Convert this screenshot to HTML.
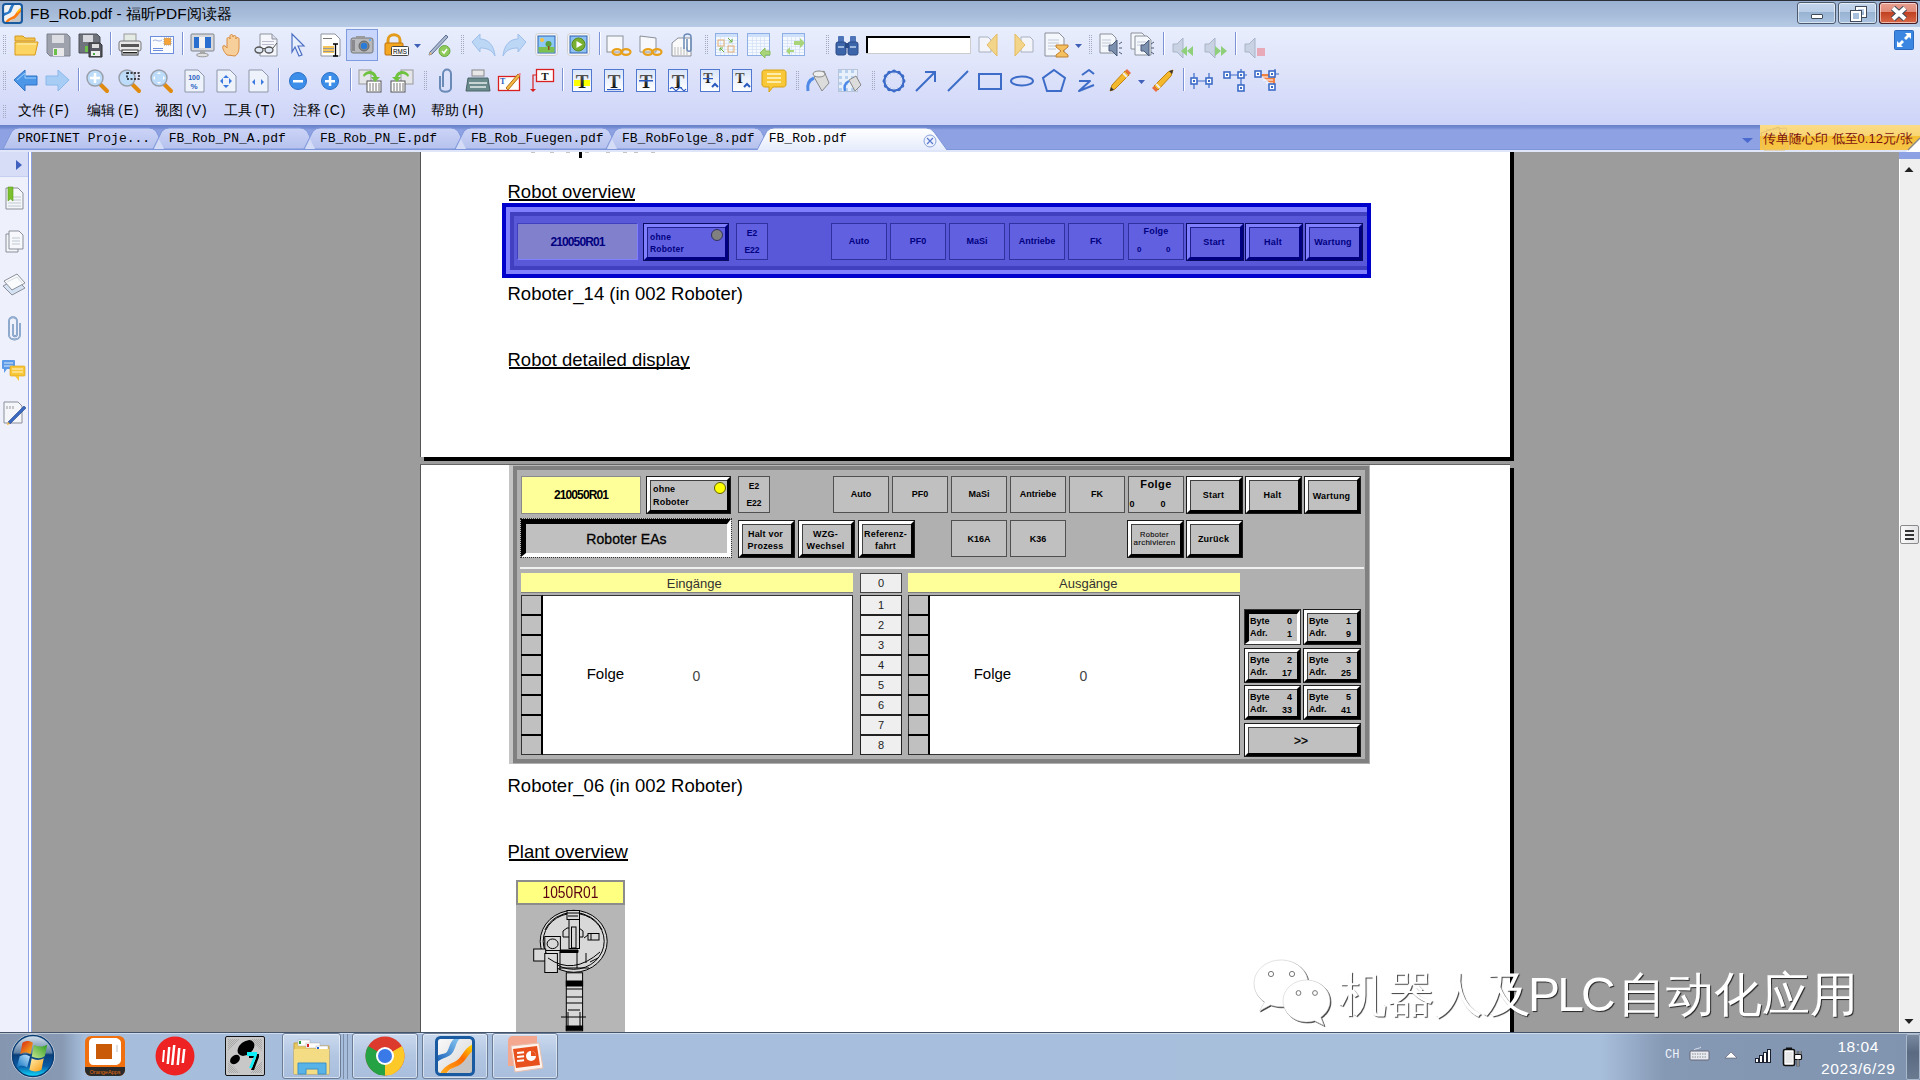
<!DOCTYPE html>
<html><head><meta charset="utf-8">
<style>
*{margin:0;padding:0;box-sizing:border-box}
html,body{width:1920px;height:1080px;overflow:hidden;background:#9c9c9c;font-family:"Liberation Sans",sans-serif;position:relative}
.a{position:absolute}
.t{position:absolute;white-space:nowrap;line-height:1}
svg{position:absolute;overflow:visible}
#title{left:0;top:0;width:1920px;height:27px;background:linear-gradient(#9bb1d1,#a9bedb 60%,#b7cbe6);border-top:1px solid #2a2f38}
#tool{left:0;top:27px;width:1920px;height:98px;background:linear-gradient(#e8eefc,#dde2fa 50%,#ccd4f8)}
#tabs{left:0;top:125px;width:1920px;height:25px;background:#8ea1e2;border-top:2px solid #6f86d6}
#sep150{left:0;top:150px;width:1920px;height:2px;background:#dfe6fa}
#side{left:0;top:152px;width:28px;height:880px;background:#eef0fb}
#sidehead{left:0;top:152px;width:28px;height:25px;background:#d7ddf6;border-bottom:1px solid #c7cff0}
#scroll{left:1899px;top:152px;width:21px;height:880px;background:#efefef;border-left:1px solid #fff}
#taskbar{left:0;top:1032px;width:1920px;height:48px;background:linear-gradient(90deg,#a8bfdc 0,#a8bfdc 1540px,#8497b3 1680px,#8094b0 100%);border-top:1px solid #44556b}
.page{background:#fff;border-left:1px solid #555}
.hb{font-weight:bold;font-size:10px;color:#000}
</style></head><body>
<div id="title" class="a"></div>
<div id="tool" class="a"></div>
<div id="tabs" class="a"></div>
<div id="sep150" class="a"></div>
<div id="side" class="a"></div>
<div id="sidehead" class="a"></div>
<div class="a" style="left:28px;top:152px;width:1px;height:880px;background:#8ea1e2"></div>
<div class="a" style="left:29px;top:152px;width:2px;height:880px;background:#fff"></div>
<div class="a" style="left:31px;top:152px;width:1px;height:880px;background:#8ea1e2"></div>
<div id="scroll" class="a"></div>
<!-- page 1 -->
<div class="a page" style="left:420px;top:152px;width:1090px;height:305px"></div>
<div class="a" style="left:1510px;top:152px;width:4px;height:309px;background:#000"></div>
<div class="a" style="left:424px;top:457px;width:1090px;height:4px;background:#000"></div>
<!-- page 2 -->
<div class="a" style="left:420px;top:464px;width:1090px;height:1px;background:#666"></div>
<div class="a page" style="left:420px;top:465px;width:1090px;height:567px"></div>
<div class="a" style="left:1510px;top:468px;width:4px;height:564px;background:#000"></div>

<svg class="a" style="left:0;top:0" width="1920" height="125"><rect x="3" y="35" width="1" height="1" fill="#a4a9bf"/><rect x="5" y="35" width="1" height="1" fill="#a4a9bf"/><rect x="3" y="37" width="1" height="1" fill="#a4a9bf"/><rect x="5" y="37" width="1" height="1" fill="#a4a9bf"/><rect x="3" y="39" width="1" height="1" fill="#a4a9bf"/><rect x="5" y="39" width="1" height="1" fill="#a4a9bf"/><rect x="3" y="41" width="1" height="1" fill="#a4a9bf"/><rect x="5" y="41" width="1" height="1" fill="#a4a9bf"/><rect x="3" y="43" width="1" height="1" fill="#a4a9bf"/><rect x="5" y="43" width="1" height="1" fill="#a4a9bf"/><rect x="3" y="45" width="1" height="1" fill="#a4a9bf"/><rect x="5" y="45" width="1" height="1" fill="#a4a9bf"/><rect x="3" y="47" width="1" height="1" fill="#a4a9bf"/><rect x="5" y="47" width="1" height="1" fill="#a4a9bf"/><rect x="3" y="49" width="1" height="1" fill="#a4a9bf"/><rect x="5" y="49" width="1" height="1" fill="#a4a9bf"/><rect x="3" y="51" width="1" height="1" fill="#a4a9bf"/><rect x="5" y="51" width="1" height="1" fill="#a4a9bf"/><rect x="3" y="53" width="1" height="1" fill="#a4a9bf"/><rect x="5" y="53" width="1" height="1" fill="#a4a9bf"/><rect x="461" y="35" width="1" height="1" fill="#a4a9bf"/><rect x="463" y="35" width="1" height="1" fill="#a4a9bf"/><rect x="461" y="37" width="1" height="1" fill="#a4a9bf"/><rect x="463" y="37" width="1" height="1" fill="#a4a9bf"/><rect x="461" y="39" width="1" height="1" fill="#a4a9bf"/><rect x="463" y="39" width="1" height="1" fill="#a4a9bf"/><rect x="461" y="41" width="1" height="1" fill="#a4a9bf"/><rect x="463" y="41" width="1" height="1" fill="#a4a9bf"/><rect x="461" y="43" width="1" height="1" fill="#a4a9bf"/><rect x="463" y="43" width="1" height="1" fill="#a4a9bf"/><rect x="461" y="45" width="1" height="1" fill="#a4a9bf"/><rect x="463" y="45" width="1" height="1" fill="#a4a9bf"/><rect x="461" y="47" width="1" height="1" fill="#a4a9bf"/><rect x="463" y="47" width="1" height="1" fill="#a4a9bf"/><rect x="461" y="49" width="1" height="1" fill="#a4a9bf"/><rect x="463" y="49" width="1" height="1" fill="#a4a9bf"/><rect x="461" y="51" width="1" height="1" fill="#a4a9bf"/><rect x="463" y="51" width="1" height="1" fill="#a4a9bf"/><rect x="461" y="53" width="1" height="1" fill="#a4a9bf"/><rect x="463" y="53" width="1" height="1" fill="#a4a9bf"/><rect x="705" y="35" width="1" height="1" fill="#a4a9bf"/><rect x="707" y="35" width="1" height="1" fill="#a4a9bf"/><rect x="705" y="37" width="1" height="1" fill="#a4a9bf"/><rect x="707" y="37" width="1" height="1" fill="#a4a9bf"/><rect x="705" y="39" width="1" height="1" fill="#a4a9bf"/><rect x="707" y="39" width="1" height="1" fill="#a4a9bf"/><rect x="705" y="41" width="1" height="1" fill="#a4a9bf"/><rect x="707" y="41" width="1" height="1" fill="#a4a9bf"/><rect x="705" y="43" width="1" height="1" fill="#a4a9bf"/><rect x="707" y="43" width="1" height="1" fill="#a4a9bf"/><rect x="705" y="45" width="1" height="1" fill="#a4a9bf"/><rect x="707" y="45" width="1" height="1" fill="#a4a9bf"/><rect x="705" y="47" width="1" height="1" fill="#a4a9bf"/><rect x="707" y="47" width="1" height="1" fill="#a4a9bf"/><rect x="705" y="49" width="1" height="1" fill="#a4a9bf"/><rect x="707" y="49" width="1" height="1" fill="#a4a9bf"/><rect x="705" y="51" width="1" height="1" fill="#a4a9bf"/><rect x="707" y="51" width="1" height="1" fill="#a4a9bf"/><rect x="705" y="53" width="1" height="1" fill="#a4a9bf"/><rect x="707" y="53" width="1" height="1" fill="#a4a9bf"/><rect x="826" y="35" width="1" height="1" fill="#a4a9bf"/><rect x="828" y="35" width="1" height="1" fill="#a4a9bf"/><rect x="826" y="37" width="1" height="1" fill="#a4a9bf"/><rect x="828" y="37" width="1" height="1" fill="#a4a9bf"/><rect x="826" y="39" width="1" height="1" fill="#a4a9bf"/><rect x="828" y="39" width="1" height="1" fill="#a4a9bf"/><rect x="826" y="41" width="1" height="1" fill="#a4a9bf"/><rect x="828" y="41" width="1" height="1" fill="#a4a9bf"/><rect x="826" y="43" width="1" height="1" fill="#a4a9bf"/><rect x="828" y="43" width="1" height="1" fill="#a4a9bf"/><rect x="826" y="45" width="1" height="1" fill="#a4a9bf"/><rect x="828" y="45" width="1" height="1" fill="#a4a9bf"/><rect x="826" y="47" width="1" height="1" fill="#a4a9bf"/><rect x="828" y="47" width="1" height="1" fill="#a4a9bf"/><rect x="826" y="49" width="1" height="1" fill="#a4a9bf"/><rect x="828" y="49" width="1" height="1" fill="#a4a9bf"/><rect x="826" y="51" width="1" height="1" fill="#a4a9bf"/><rect x="828" y="51" width="1" height="1" fill="#a4a9bf"/><rect x="826" y="53" width="1" height="1" fill="#a4a9bf"/><rect x="828" y="53" width="1" height="1" fill="#a4a9bf"/><rect x="1089" y="35" width="1" height="1" fill="#a4a9bf"/><rect x="1091" y="35" width="1" height="1" fill="#a4a9bf"/><rect x="1089" y="37" width="1" height="1" fill="#a4a9bf"/><rect x="1091" y="37" width="1" height="1" fill="#a4a9bf"/><rect x="1089" y="39" width="1" height="1" fill="#a4a9bf"/><rect x="1091" y="39" width="1" height="1" fill="#a4a9bf"/><rect x="1089" y="41" width="1" height="1" fill="#a4a9bf"/><rect x="1091" y="41" width="1" height="1" fill="#a4a9bf"/><rect x="1089" y="43" width="1" height="1" fill="#a4a9bf"/><rect x="1091" y="43" width="1" height="1" fill="#a4a9bf"/><rect x="1089" y="45" width="1" height="1" fill="#a4a9bf"/><rect x="1091" y="45" width="1" height="1" fill="#a4a9bf"/><rect x="1089" y="47" width="1" height="1" fill="#a4a9bf"/><rect x="1091" y="47" width="1" height="1" fill="#a4a9bf"/><rect x="1089" y="49" width="1" height="1" fill="#a4a9bf"/><rect x="1091" y="49" width="1" height="1" fill="#a4a9bf"/><rect x="1089" y="51" width="1" height="1" fill="#a4a9bf"/><rect x="1091" y="51" width="1" height="1" fill="#a4a9bf"/><rect x="1089" y="53" width="1" height="1" fill="#a4a9bf"/><rect x="1091" y="53" width="1" height="1" fill="#a4a9bf"/><rect x="110" y="32" width="1" height="23" fill="#7b93d6"/><rect x="111" y="32" width="1" height="23" fill="#fff"/><rect x="182" y="32" width="1" height="23" fill="#7b93d6"/><rect x="183" y="32" width="1" height="23" fill="#fff"/><rect x="599" y="32" width="1" height="23" fill="#7b93d6"/><rect x="600" y="32" width="1" height="23" fill="#fff"/><rect x="1163" y="32" width="1" height="23" fill="#7b93d6"/><rect x="1164" y="32" width="1" height="23" fill="#fff"/><rect x="1235" y="32" width="1" height="23" fill="#7b93d6"/><rect x="1236" y="32" width="1" height="23" fill="#fff"/><g transform="translate(14,33)"><path d="M1 3h8l2 2h10v3H1z" fill="#f3c44c" stroke="#d59a20"/><path d="M1 9h23l-3 13H1z" fill="#fbd462" stroke="#d89a1a"/><path d="M3 11h19" stroke="#fff3b8"/></g><g transform="translate(46,33)"><path d="M1 1h20l3 3v19H4l-3-3z" fill="#9ea2ac" stroke="#7d828c"/><rect x="6" y="2" width="12" height="8" fill="#dcdde2"/><rect x="7" y="15" width="11" height="8" fill="#e8e8ea"/><rect x="8" y="16" width="3" height="6" fill="#6cc04a"/></g><g transform="translate(78,33)"><path d="M1 1h18l3 3v16H1z" fill="#6f737c" stroke="#4d5058"/><rect x="5" y="2" width="10" height="7" fill="#d8d9de"/><rect x="7" y="13" width="3" height="6" fill="#6cc04a"/><path d="M11 10h11l2 2v12H11z" fill="#555860" stroke="#333"/><rect x="14" y="11" width="7" height="4" fill="#ddd"/><rect x="13" y="18" width="9" height="5" fill="#eee"/><rect x="15" y="20" width="2" height="2" fill="#4a4"/></g><g transform="translate(118,33)"><rect x="6" y="1" width="12" height="8" fill="#e4ebe4" stroke="#999"/><rect x="1" y="8" width="22" height="10" rx="2" fill="#e8e8e8" stroke="#777"/><rect x="3" y="11" width="18" height="3" fill="#555"/><rect x="4" y="17" width="16" height="5" fill="#fff" stroke="#333"/><rect x="5" y="19" width="14" height="1.5" fill="#222"/></g><g transform="translate(150,33)"><rect x="0.5" y="3.5" width="23" height="17" fill="#fafbff" stroke="#6d8edc"/><rect x="14" y="5" width="7" height="7" fill="#f6a33a" stroke="#999" stroke-dasharray="1 1"/><path d="M3 8c3-3 5 2 9-1" stroke="#9db0e0" fill="none"/><rect x="3" y="15" width="10" height="1" fill="#6d8edc"/><rect x="3" y="17" width="10" height="1" fill="#6d8edc"/></g><g transform="translate(190,33)"><rect x="1" y="1" width="23" height="17" rx="1" fill="#d7d8dc" stroke="#7d828c"/><rect x="4" y="4" width="17" height="11" fill="#2a6fd0"/><rect x="9" y="4" width="6" height="11" fill="#f2f2f2"/><rect x="10" y="18" width="5" height="3" fill="#aaa"/><ellipse cx="12.5" cy="22" rx="6" ry="1.8" fill="#e0e0e0" stroke="#999"/></g><g transform="translate(222,33)"><path d="M5 22c-3-3-5-7-4-9 1-1 3 0 4 2V6c0-2 3-2 3 0V3c0-2 3-2 3 0v1c0-2 3-2 3 0v2c0-2 3-2 3 0v9c0 4-2 7-4 8z" fill="#f7cf9a" stroke="#d88c40"/></g><g transform="translate(254,33)"><path d="M6 1h12l5 5v17H6z" fill="#f4f6fb" stroke="#8d939e"/><path d="M18 1v5h5" fill="#dde" stroke="#8d939e"/><rect x="8" y="8" width="12" height="1" fill="#bbc"/><rect x="8" y="11" width="12" height="1" fill="#bbc"/><ellipse cx="5" cy="17" rx="4" ry="3" fill="#dfe8f4" stroke="#555" stroke-width="1.3"/><ellipse cx="15" cy="17" rx="4" ry="3" fill="#dfe8f4" stroke="#555" stroke-width="1.3"/><path d="M9 16q1-2 2 0M19 15l4-5" stroke="#555" fill="none"/></g><g transform="translate(291,33)"><path d="M1 1l12 12-6 0 4 9-3 1-4-9-3 5z" fill="#e8f0fc" stroke="#4c6fc4" stroke-width="1.2"/></g><g transform="translate(320,33)"><path d="M1 1h14l5 5v17H1z" fill="#fff" stroke="#8d939e"/><rect x="3" y="5" width="9" height="1" fill="#777"/><rect x="3" y="13" width="11" height="7" fill="#f6c55a"/><rect x="3" y="15" width="11" height="1" fill="#999"/><rect x="3" y="18" width="11" height="1" fill="#999"/><path d="M13 11h5M15.5 11v12M13 23h5" stroke="#000" stroke-width="1.3"/></g><rect x="346.5" y="29.5" width="31" height="31" fill="#c9d6fb" stroke="#7f9be0"/><g transform="translate(350,35)"><rect x="1" y="3" width="22" height="15" rx="2" fill="#b8b9bd" stroke="#777"/><rect x="6" y="1" width="9" height="3" fill="#999"/><rect x="2" y="5" width="3" height="11" fill="#8a8a8e"/><circle cx="14" cy="11" r="5" fill="#888" stroke="#666"/><circle cx="14" cy="11" r="3.2" fill="#2a7ad8"/><circle cx="20" cy="5" r="1" fill="#4af"/></g><g transform="translate(384,33)"><path d="M4 11V7c0-7 12-7 12 0v4" stroke="#e39b1c" stroke-width="3" fill="none"/><rect x="1" y="10" width="18" height="12" rx="1" fill="#f4a821" stroke="#c07010"/><rect x="7.5" y="13.5" width="17" height="9" rx="1" fill="#fff" stroke="#444"/><text x="16" y="21" font-size="7" font-family="Liberation Sans" text-anchor="middle" fill="#000" textLength="14" lengthAdjust="spacingAndGlyphs">RMS</text></g><path d="M414 44h7l-3.5 4z" fill="#3f5fb8"/><g transform="translate(427,33)"><path d="M2 22l3-1 16-17-2-2L3 19z" fill="#aab6cc" stroke="#5a6e92"/><path d="M2 22l1-3 2 2z" fill="#f6c070"/><circle cx="17.5" cy="18" r="5.5" fill="#8fcb5a" stroke="#6aa844"/><path d="M15 18l2 2 3-4" stroke="#fff" stroke-width="1.5" fill="none"/></g><g transform="translate(471,33)"><path d="M1 9l8-8v5c8 0 14 6 15 17-3-6-8-8-15-8v4z" fill="#bcd6f6" stroke="#9ec0ea"/></g><g transform="translate(503,33)"><path d="M23 9l-8-8v5C7 6 1 12 0 23c3-6 8-8 15-8v4z" fill="#bcd6f6" stroke="#9ec0ea"/></g><g transform="translate(535,33)"><rect x="0.5" y="0.5" width="22" height="22" rx="3" fill="#f4f4f4" stroke="#d0d0d0"/><rect x="3" y="3" width="17" height="17" fill="#8ec8f4" stroke="#2c62b8"/><rect x="3.5" y="14" width="16" height="5.5" fill="#7cc050"/><circle cx="7" cy="7" r="2" fill="#f8c040"/><circle cx="13.5" cy="11" r="3" fill="#5aa040"/><rect x="13" y="13" width="1.5" height="4" fill="#8a5020"/></g><g transform="translate(567,33)"><rect x="0.5" y="0.5" width="22" height="22" rx="3" fill="#f4f4f4" stroke="#d0d0d0"/><rect x="3" y="3" width="17" height="17" fill="#8ec0f0" stroke="#2c62b8"/><circle cx="11.5" cy="11.5" r="6.5" fill="#7ab030" stroke="#5a8a20"/><path d="M9.5 8v7l6-3.5z" fill="#fff"/></g><g transform="translate(606,35)"><rect x="1" y="1" width="16" height="16" fill="#f6f8fc" stroke="#8a8f99"/><ellipse cx="11" cy="17" rx="4.5" ry="2.8" fill="none" stroke="#e8a018" stroke-width="2.2"/><ellipse cx="20" cy="17" rx="4.5" ry="2.8" fill="none" stroke="#e8a018" stroke-width="2.2"/></g><g transform="translate(639,35)"><path d="M1 1l16 2v14H1z" fill="#f6f8fc" stroke="#8a8f99"/><ellipse cx="9" cy="17" rx="4.5" ry="2.8" fill="none" stroke="#e8a018" stroke-width="2.2"/><ellipse cx="18" cy="17" rx="4.5" ry="2.8" fill="none" stroke="#e8a018" stroke-width="2.2"/></g><g transform="translate(671,33)"><path d="M1 10l6-5h13v18H1z" fill="#fafafa" stroke="#8a8f99"/><path d="M4 14v8M7 14v8M10 14v8M13 14v8M16 14v8" stroke="#bbb"/><path d="M13 16V4c0-4 7-4 7 0v12c0 3-4 3-4 0V6" fill="none" stroke="#6a8ab8" stroke-width="1.5"/></g><g transform="translate(715,33)"><rect x="0.5" y="0.5" width="22" height="22" fill="#f4f8ff" stroke="#8eaee6"/><rect x="1" y="1" width="21" height="3" fill="#cfe0fa"/><rect x="1" y="7" width="21" height="0.6" fill="#cddcf4"/><rect x="1" y="10" width="21" height="0.6" fill="#cddcf4"/><rect x="1" y="13" width="21" height="0.6" fill="#cddcf4"/><rect x="1" y="16" width="21" height="0.6" fill="#cddcf4"/><rect x="1" y="19" width="21" height="0.6" fill="#cddcf4"/><rect x="5" y="4" width="0.6" height="18" fill="#cddcf4"/><rect x="9" y="4" width="0.6" height="18" fill="#cddcf4"/><rect x="13" y="4" width="0.6" height="18" fill="#cddcf4"/><rect x="17" y="4" width="0.6" height="18" fill="#cddcf4"/><rect x="3" y="7" width="6" height="6" fill="none" stroke="#e6b070"/><rect x="13" y="13" width="6" height="6" fill="none" stroke="#e6b070"/><path d="M13 5l4 4M17 6v3h-3M9 19l-4-4M5 18v-3h3" stroke="#6ab040" fill="none"/></g><g transform="translate(747,33)"><rect x="0.5" y="0.5" width="22" height="22" fill="#f4f8ff" stroke="#8eaee6"/><rect x="1" y="1" width="21" height="3" fill="#cfe0fa"/><rect x="1" y="7" width="21" height="0.6" fill="#cddcf4"/><rect x="1" y="10" width="21" height="0.6" fill="#cddcf4"/><rect x="1" y="13" width="21" height="0.6" fill="#cddcf4"/><rect x="1" y="16" width="21" height="0.6" fill="#cddcf4"/><rect x="1" y="19" width="21" height="0.6" fill="#cddcf4"/><rect x="5" y="4" width="0.6" height="18" fill="#cddcf4"/><rect x="9" y="4" width="0.6" height="18" fill="#cddcf4"/><rect x="13" y="4" width="0.6" height="18" fill="#cddcf4"/><rect x="17" y="4" width="0.6" height="18" fill="#cddcf4"/><path d="M13 20l5-5v3h5v4h-5v3z" fill="#a8d47a" stroke="#8cc060"/></g><g transform="translate(782,33)"><rect x="0.5" y="0.5" width="22" height="22" fill="#f4f8ff" stroke="#8eaee6"/><rect x="1" y="1" width="21" height="3" fill="#cfe0fa"/><rect x="1" y="7" width="21" height="0.6" fill="#cddcf4"/><rect x="1" y="10" width="21" height="0.6" fill="#cddcf4"/><rect x="1" y="13" width="21" height="0.6" fill="#cddcf4"/><rect x="1" y="16" width="21" height="0.6" fill="#cddcf4"/><rect x="1" y="19" width="21" height="0.6" fill="#cddcf4"/><rect x="5" y="4" width="0.6" height="18" fill="#cddcf4"/><rect x="9" y="4" width="0.6" height="18" fill="#cddcf4"/><rect x="13" y="4" width="0.6" height="18" fill="#cddcf4"/><rect x="17" y="4" width="0.6" height="18" fill="#cddcf4"/><path d="M12 8h6v-3l5 5-5 5v-3h-6z" fill="#a8d47a"/><path d="M12 17h-4v-3l-4 4 4 4v-3h4z" fill="#a8d47a"/></g><g transform="translate(836,34)"><rect x="2" y="2" width="6" height="7" rx="1" fill="#4d74b8"/><rect x="14" y="2" width="6" height="7" rx="1" fill="#4d74b8"/><rect x="0" y="8" width="10" height="13" rx="2" fill="#3c64a8" stroke="#2a4a88"/><rect x="12" y="8" width="10" height="13" rx="2" fill="#3c64a8" stroke="#2a4a88"/><rect x="9" y="9" width="4" height="5" fill="#2a4a88"/><rect x="2" y="12" width="6" height="2" fill="#9fb8e0"/><rect x="14" y="12" width="6" height="2" fill="#9fb8e0"/></g><rect x="866" y="36" width="105" height="18" fill="#fff"/><rect x="866" y="36" width="105" height="2" fill="#000"/><rect x="866" y="36" width="2" height="18" fill="#000"/><rect x="866" y="53" width="105" height="1" fill="#ccc"/><rect x="970" y="36" width="1" height="18" fill="#ccc"/><g transform="translate(979,34)"><path d="M0 3h9l3 3v12H0z" fill="#f2f4fa" stroke="#a8b0c0"/><path d="M8 11l10-11v22z" fill="#f3d58a" stroke="#e4bb60"/></g><g transform="translate(1011,34)"><path d="M10 3h9l3 3v12H10z" fill="#f2f4fa" stroke="#a8b0c0"/><path d="M14 11L4 0v22z" fill="#f3d58a" stroke="#e4bb60"/></g><g transform="translate(1044,33)"><path d="M1 0h14l5 5v18H1z" fill="#f4f7fc" stroke="#8a8f99"/><path d="M4 7h11M4 10h11M4 13h11M4 16h8" stroke="#c0c8d8"/><path d="M12 12h12v2l-5 4 5 4v2H12v-2l5-4-5-4z" fill="#f4c060" stroke="#c08030"/></g><path d="M1075 44h7l-3.5 4z" fill="#3f5fb8"/><g transform="translate(1099,33)"><path d="M1 1h12l4 4v15H1z" fill="#f4f7fc" stroke="#8a8f99"/><path d="M3 7h9M3 10h9M3 13h6" stroke="#c0c8d8"/><path d="M10 12h3l5-5v16l-5-5h-3z" fill="#7b8fae" stroke="#4a5a78"/><path d="M20 11l3-2M20 15h3M20 19l3 2" stroke="#4a5a78"/></g><g transform="translate(1131,33)"><path d="M0 0h11l3 3v13H0z" fill="#f4f7fc" stroke="#8a8f99"/><path d="M4 3h12l4 4v15H4z" fill="#f4f7fc" stroke="#8a8f99"/><path d="M6 9h9M6 12h9" stroke="#c0c8d8"/><path d="M10 12h3l5-5v16l-5-5h-3z" fill="#7b8fae" stroke="#4a5a78"/><path d="M20 11l3-2M20 15h3M20 19l3 2" stroke="#4a5a78"/></g><g transform="translate(1171,36)"><path d="M2 8h4l6-6v20l-6-6H2z" fill="#c8d2e2" stroke="#a8b4c8"/><path d="M22 10v10l-6-5zM16 10v10l-6-5z" fill="#8ecf7a"/></g><g transform="translate(1203,36)"><path d="M2 8h4l6-6v20l-6-6H2z" fill="#c8d2e2" stroke="#a8b4c8"/><path d="M12 10v10l6-5zM18 10v10l6-5z" fill="#8ecf7a"/></g><g transform="translate(1243,36)"><path d="M2 8h4l6-6v20l-6-6H2z" fill="#c8d2e2" stroke="#a8b4c8"/><rect x="14" y="12" width="8" height="8" fill="#e8aab8"/></g><rect x="3" y="71" width="1" height="1" fill="#a4a9bf"/><rect x="5" y="71" width="1" height="1" fill="#a4a9bf"/><rect x="3" y="73" width="1" height="1" fill="#a4a9bf"/><rect x="5" y="73" width="1" height="1" fill="#a4a9bf"/><rect x="3" y="75" width="1" height="1" fill="#a4a9bf"/><rect x="5" y="75" width="1" height="1" fill="#a4a9bf"/><rect x="3" y="77" width="1" height="1" fill="#a4a9bf"/><rect x="5" y="77" width="1" height="1" fill="#a4a9bf"/><rect x="3" y="79" width="1" height="1" fill="#a4a9bf"/><rect x="5" y="79" width="1" height="1" fill="#a4a9bf"/><rect x="3" y="81" width="1" height="1" fill="#a4a9bf"/><rect x="5" y="81" width="1" height="1" fill="#a4a9bf"/><rect x="3" y="83" width="1" height="1" fill="#a4a9bf"/><rect x="5" y="83" width="1" height="1" fill="#a4a9bf"/><rect x="3" y="85" width="1" height="1" fill="#a4a9bf"/><rect x="5" y="85" width="1" height="1" fill="#a4a9bf"/><rect x="3" y="87" width="1" height="1" fill="#a4a9bf"/><rect x="5" y="87" width="1" height="1" fill="#a4a9bf"/><rect x="3" y="89" width="1" height="1" fill="#a4a9bf"/><rect x="5" y="89" width="1" height="1" fill="#a4a9bf"/><rect x="424" y="71" width="1" height="1" fill="#a4a9bf"/><rect x="426" y="71" width="1" height="1" fill="#a4a9bf"/><rect x="424" y="73" width="1" height="1" fill="#a4a9bf"/><rect x="426" y="73" width="1" height="1" fill="#a4a9bf"/><rect x="424" y="75" width="1" height="1" fill="#a4a9bf"/><rect x="426" y="75" width="1" height="1" fill="#a4a9bf"/><rect x="424" y="77" width="1" height="1" fill="#a4a9bf"/><rect x="426" y="77" width="1" height="1" fill="#a4a9bf"/><rect x="424" y="79" width="1" height="1" fill="#a4a9bf"/><rect x="426" y="79" width="1" height="1" fill="#a4a9bf"/><rect x="424" y="81" width="1" height="1" fill="#a4a9bf"/><rect x="426" y="81" width="1" height="1" fill="#a4a9bf"/><rect x="424" y="83" width="1" height="1" fill="#a4a9bf"/><rect x="426" y="83" width="1" height="1" fill="#a4a9bf"/><rect x="424" y="85" width="1" height="1" fill="#a4a9bf"/><rect x="426" y="85" width="1" height="1" fill="#a4a9bf"/><rect x="424" y="87" width="1" height="1" fill="#a4a9bf"/><rect x="426" y="87" width="1" height="1" fill="#a4a9bf"/><rect x="424" y="89" width="1" height="1" fill="#a4a9bf"/><rect x="426" y="89" width="1" height="1" fill="#a4a9bf"/><rect x="796" y="71" width="1" height="1" fill="#a4a9bf"/><rect x="798" y="71" width="1" height="1" fill="#a4a9bf"/><rect x="796" y="73" width="1" height="1" fill="#a4a9bf"/><rect x="798" y="73" width="1" height="1" fill="#a4a9bf"/><rect x="796" y="75" width="1" height="1" fill="#a4a9bf"/><rect x="798" y="75" width="1" height="1" fill="#a4a9bf"/><rect x="796" y="77" width="1" height="1" fill="#a4a9bf"/><rect x="798" y="77" width="1" height="1" fill="#a4a9bf"/><rect x="796" y="79" width="1" height="1" fill="#a4a9bf"/><rect x="798" y="79" width="1" height="1" fill="#a4a9bf"/><rect x="796" y="81" width="1" height="1" fill="#a4a9bf"/><rect x="798" y="81" width="1" height="1" fill="#a4a9bf"/><rect x="796" y="83" width="1" height="1" fill="#a4a9bf"/><rect x="798" y="83" width="1" height="1" fill="#a4a9bf"/><rect x="796" y="85" width="1" height="1" fill="#a4a9bf"/><rect x="798" y="85" width="1" height="1" fill="#a4a9bf"/><rect x="796" y="87" width="1" height="1" fill="#a4a9bf"/><rect x="798" y="87" width="1" height="1" fill="#a4a9bf"/><rect x="796" y="89" width="1" height="1" fill="#a4a9bf"/><rect x="798" y="89" width="1" height="1" fill="#a4a9bf"/><rect x="872" y="71" width="1" height="1" fill="#a4a9bf"/><rect x="874" y="71" width="1" height="1" fill="#a4a9bf"/><rect x="872" y="73" width="1" height="1" fill="#a4a9bf"/><rect x="874" y="73" width="1" height="1" fill="#a4a9bf"/><rect x="872" y="75" width="1" height="1" fill="#a4a9bf"/><rect x="874" y="75" width="1" height="1" fill="#a4a9bf"/><rect x="872" y="77" width="1" height="1" fill="#a4a9bf"/><rect x="874" y="77" width="1" height="1" fill="#a4a9bf"/><rect x="872" y="79" width="1" height="1" fill="#a4a9bf"/><rect x="874" y="79" width="1" height="1" fill="#a4a9bf"/><rect x="872" y="81" width="1" height="1" fill="#a4a9bf"/><rect x="874" y="81" width="1" height="1" fill="#a4a9bf"/><rect x="872" y="83" width="1" height="1" fill="#a4a9bf"/><rect x="874" y="83" width="1" height="1" fill="#a4a9bf"/><rect x="872" y="85" width="1" height="1" fill="#a4a9bf"/><rect x="874" y="85" width="1" height="1" fill="#a4a9bf"/><rect x="872" y="87" width="1" height="1" fill="#a4a9bf"/><rect x="874" y="87" width="1" height="1" fill="#a4a9bf"/><rect x="872" y="89" width="1" height="1" fill="#a4a9bf"/><rect x="874" y="89" width="1" height="1" fill="#a4a9bf"/><rect x="78" y="68" width="1" height="23" fill="#7b93d6"/><rect x="79" y="68" width="1" height="23" fill="#fff"/><rect x="278" y="68" width="1" height="23" fill="#7b93d6"/><rect x="279" y="68" width="1" height="23" fill="#fff"/><rect x="350" y="68" width="1" height="23" fill="#7b93d6"/><rect x="351" y="68" width="1" height="23" fill="#fff"/><rect x="562" y="68" width="1" height="23" fill="#7b93d6"/><rect x="563" y="68" width="1" height="23" fill="#fff"/><rect x="1183" y="68" width="1" height="23" fill="#7b93d6"/><rect x="1184" y="68" width="1" height="23" fill="#fff"/><g transform="translate(14,69)"><path d="M0 11L11 1v6h12v9H11v6z" fill="#4c96e8" stroke="#2e74c8"/><path d="M3 11l8-7v5h11" stroke="#9cd0ff" fill="none"/></g><g transform="translate(46,69)"><path d="M23 11L12 1v6H0v9h12v6z" fill="#a8cdf4" stroke="#8ab8ec"/></g><g transform="translate(86,69)"><path d="M14 15l7 7" stroke="#e08a10" stroke-width="4" stroke-linecap="round"/><circle cx="9" cy="9" r="8" fill="#bcdcfa" stroke="#9aa0aa" stroke-width="1.5"/><path d="M9 4v10M4 9h10" stroke="#fff" stroke-width="2.5"/></g><g transform="translate(118,69)"><path d="M14 15l7 7" stroke="#e08a10" stroke-width="4" stroke-linecap="round"/><circle cx="9" cy="9" r="8" fill="#bcdcfa" stroke="#9aa0aa" stroke-width="1.5"/><rect x="9" y="4" width="12" height="6" fill="none" stroke="#111" stroke-width="1.4" stroke-dasharray="2 1.5"/></g><g transform="translate(150,69)"><path d="M14 15l7 7" stroke="#e08a10" stroke-width="4" stroke-linecap="round"/><circle cx="9" cy="9" r="8" fill="#bcdcfa" stroke="#9aa0aa" stroke-width="1.5"/><path d="M9 3l2 2H7zM9 15l2-2H7zM3 9l2-2v4zM15 9l-2-2v4z" fill="#fff"/></g><g transform="translate(184,69)"><path d="M1 1h13l6 6v16H1z" fill="#eef3fb" stroke="#8d96a8"/><text x="10" y="11" font-size="7" font-weight="bold" font-family="Liberation Sans" text-anchor="middle" fill="#2a62c0">100</text><text x="10" y="20" font-size="8" font-weight="bold" font-family="Liberation Sans" text-anchor="middle" fill="#2a62c0">%</text></g><g transform="translate(216,69)"><path d="M1 1h13l6 6v16H1z" fill="#eef3fb" stroke="#8d96a8"/><path d="M10 6l3 3H7zM10 19l3-3H7zM4 12l3-3v6zM16 12l-3-3v6z" fill="#3a7ae0"/></g><g transform="translate(248,69)"><path d="M1 1h13l6 6v16H1z" fill="#eef3fb" stroke="#8d96a8"/><path d="M4 13l3-3v6zM16 13l-3-3v6z" fill="#3a7ae0"/></g><g transform="translate(289,72)"><circle cx="9" cy="9" r="8.5" fill="#3d8ee8" stroke="#2a70c8"/><rect x="4" y="8" width="10" height="2.5" fill="#fff"/></g><g transform="translate(321,72)"><circle cx="9" cy="9" r="8.5" fill="#3d8ee8" stroke="#2a70c8"/><rect x="4" y="8" width="10" height="2.5" fill="#fff"/><rect x="7.8" y="4" width="2.5" height="10" fill="#fff"/></g><g transform="translate(358,69)"><rect x="1" y="1" width="12" height="14" fill="#e4e6ea" stroke="#999"/><rect x="9" y="12" width="14" height="11" fill="#fff" stroke="#555"/><path d="M12 14v8M15 14v8M18 14v8M21 14v8" stroke="#777"/><path d="M5 6c4-6 12-5 14 2h3l-5 5-4-5h3c-2-4-7-4-10 0z" fill="#6fc23e"/></g><g transform="translate(390,69)"><rect x="11" y="1" width="12" height="14" fill="#e4e6ea" stroke="#999"/><rect x="1" y="12" width="14" height="11" fill="#fff" stroke="#555"/><path d="M4 14v8M7 14v8M10 14v8M13 14v8" stroke="#777"/><path d="M19 6c-4-6-12-5-14 2H2l5 5 4-5H8c2-4 7-4 10 0z" fill="#6fc23e"/></g><g transform="translate(439,69)"><path d="M4 18V5c0-6 8-6 8 0v14c0 5-11 5-11 0V7" fill="none" stroke="#6a8ab8" stroke-width="2"/></g><g transform="translate(466,70)"><rect x="6" y="0" width="12" height="6" fill="#e8e8e8" stroke="#888"/><path d="M2 8h20l2 13H0z" fill="#6a8a8c" stroke="#4a6466"/><rect x="3" y="12" width="18" height="2" fill="#c8d4d4"/><rect x="4" y="16" width="16" height="2" fill="#c8d4d4"/></g><g transform="translate(498,71)"><rect x="0.5" y="5.5" width="21" height="14" fill="#fff" stroke="#d82020" stroke-width="1.3"/><text x="2" y="13" font-size="8" font-weight="bold" font-family="Liberation Serif" fill="#2a5ac0">T</text><path d="M8 17l12-14 2 2-12 14z" fill="#f4b840" stroke="#b07020"/><path d="M20 3l2 2 1-2-1-1z" fill="#f08090"/></g><g transform="translate(530,69)"><rect x="6.5" y="0.5" width="17" height="12" fill="#fff" stroke="#d82020" stroke-width="1.3"/><text x="15" y="10.5" font-size="11" font-weight="bold" font-family="Liberation Serif" text-anchor="middle" fill="#111">T</text><path d="M6 6H3v16" stroke="#d82020" fill="none" stroke-width="1.2"/><path d="M0 20l3 3 3-3z" fill="#d82020"/></g><defs><linearGradient id="tbg" x1="0" y1="0" x2="0" y2="1"><stop offset="0" stop-color="#d8e4f8"/><stop offset=".5" stop-color="#eef3fc"/><stop offset="1" stop-color="#fff"/></linearGradient><linearGradient id="tg2" x1="0" y1="0" x2="0" y2="1"><stop offset="0" stop-color="#666"/><stop offset="1" stop-color="#000"/></linearGradient></defs><g transform="translate(572,69)"><rect x="0.5" y="0.5" width="19" height="22" fill="url(#tbg)" stroke="#5078d0"/><rect x="2" y="11" width="16" height="6" fill="#ffff00"/><text x="10" y="19" font-size="19" font-weight="bold" font-family="Liberation Serif" text-anchor="middle" fill="url(#tg2)">T</text></g><g transform="translate(604,69)"><rect x="0.5" y="0.5" width="19" height="22" fill="url(#tbg)" stroke="#5078d0"/><text x="10" y="19" font-size="19" font-weight="bold" font-family="Liberation Serif" text-anchor="middle" fill="url(#tg2)">T</text><rect x="3" y="20" width="14" height="1.2" fill="#2a5ac0"/></g><g transform="translate(636,69)"><rect x="0.5" y="0.5" width="19" height="22" fill="url(#tbg)" stroke="#5078d0"/><text x="10" y="19" font-size="19" font-weight="bold" font-family="Liberation Serif" text-anchor="middle" fill="url(#tg2)">T</text><rect x="3" y="11" width="14" height="1.5" fill="#2a5ac0"/></g><g transform="translate(668,69)"><rect x="0.5" y="0.5" width="19" height="22" fill="url(#tbg)" stroke="#5078d0"/><text x="10" y="19" font-size="19" font-weight="bold" font-family="Liberation Serif" text-anchor="middle" fill="url(#tg2)">T</text><path d="M2 20q2-3 4 0t4 0t4 0t4 0" stroke="#2a5ac0" fill="none" stroke-width="1.3"/></g><g transform="translate(700,69)"><rect x="0.5" y="0.5" width="19" height="22" fill="url(#tbg)" stroke="#5078d0"/><text x="8" y="14" font-size="14" font-weight="bold" font-family="Liberation Serif" text-anchor="middle" fill="url(#tg2)">T</text><rect x="3" y="9" width="10" height="1.2" fill="#2a5ac0"/><path d="M12 18l3-3 3 3" stroke="#2a5ac0" stroke-width="2" fill="none"/></g><g transform="translate(732,69)"><rect x="0.5" y="0.5" width="19" height="22" fill="url(#tbg)" stroke="#5078d0"/><text x="8" y="14" font-size="14" font-weight="bold" font-family="Liberation Serif" text-anchor="middle" fill="url(#tg2)">T</text><path d="M12 18l3-3 3 3" stroke="#2a5ac0" stroke-width="2" fill="none"/></g><g transform="translate(762,69)"><path d="M3 1h18c2 0 3 1 3 3v11c0 2-1 3-3 3H11l-4 5v-5H3c-2 0-3-1-3-3V4c0-2 1-3 3-3z" fill="#f8c838" stroke="#d8a010"/><path d="M5 5h14M5 9h14M5 13h14" stroke="#fff8d0" stroke-width="1.3"/></g><g transform="translate(806,69)"><path d="M8 8l10-6 5 12-7 8z" fill="#dcdcdc" stroke="#888"/><ellipse cx="13" cy="5" rx="6" ry="3" fill="#eee" stroke="#888"/><path d="M8 9c-5 2-7 7-6 13" stroke="#4d8ae8" stroke-width="3" fill="none"/></g><g transform="translate(838,69)"><rect x="0.5" y="0.5" width="19" height="22" fill="#e8f0fb" stroke="#b8c4d8"/><rect x="1" y="1" width="3" height="3" fill="#b8d0f0"/><rect x="1" y="7" width="3" height="3" fill="#b8d0f0"/><rect x="1" y="13" width="3" height="3" fill="#b8d0f0"/><rect x="1" y="19" width="3" height="3" fill="#b8d0f0"/><rect x="7" y="1" width="3" height="3" fill="#b8d0f0"/><rect x="7" y="7" width="3" height="3" fill="#b8d0f0"/><rect x="7" y="13" width="3" height="3" fill="#b8d0f0"/><rect x="7" y="19" width="3" height="3" fill="#b8d0f0"/><rect x="13" y="1" width="3" height="3" fill="#b8d0f0"/><rect x="13" y="7" width="3" height="3" fill="#b8d0f0"/><rect x="13" y="13" width="3" height="3" fill="#b8d0f0"/><rect x="13" y="19" width="3" height="3" fill="#b8d0f0"/><path d="M11 11l7-4 5 9-6 6z" fill="#dcdcdc" stroke="#888"/><path d="M11 12c-4 2-5 6-4 10" stroke="#4d8ae8" stroke-width="2.5" fill="none"/></g><g transform="translate(882,69)"><circle cx="12" cy="12" r="9.5" fill="none" stroke="#3c6cc8" stroke-width="2.2"/><circle cx="21.50" cy="12.00" r="2" fill="#3c6cc8"/><circle cx="20.23" cy="16.75" r="2" fill="#3c6cc8"/><circle cx="16.75" cy="20.23" r="2" fill="#3c6cc8"/><circle cx="12.00" cy="21.50" r="2" fill="#3c6cc8"/><circle cx="7.25" cy="20.23" r="2" fill="#3c6cc8"/><circle cx="3.77" cy="16.75" r="2" fill="#3c6cc8"/><circle cx="2.50" cy="12.00" r="2" fill="#3c6cc8"/><circle cx="3.77" cy="7.25" r="2" fill="#3c6cc8"/><circle cx="7.25" cy="3.77" r="2" fill="#3c6cc8"/><circle cx="12.00" cy="2.50" r="2" fill="#3c6cc8"/><circle cx="16.75" cy="3.77" r="2" fill="#3c6cc8"/><circle cx="20.23" cy="7.25" r="2" fill="#3c6cc8"/><circle cx="12" cy="12" r="8" fill="none" stroke="#dfe5fa" stroke-width="1"/></g><g transform="translate(914,69)"><path d="M2 22L21 3M11 3h10v10" stroke="#3c6cc8" stroke-width="2" fill="none"/></g><g transform="translate(946,69)"><path d="M2 22L22 2" stroke="#3c6cc8" stroke-width="2" fill="none"/></g><g transform="translate(978,73)"><rect x="1" y="1" width="22" height="15" fill="none" stroke="#3c6cc8" stroke-width="2"/></g><g transform="translate(1010,75)"><ellipse cx="12" cy="6" rx="11" ry="4.5" fill="none" stroke="#3c6cc8" stroke-width="2"/></g><g transform="translate(1042,69)"><path d="M12 1l11 8-4 13H5L1 9z" fill="none" stroke="#3c6cc8" stroke-width="2"/></g><g transform="translate(1076,69)"><path d="M6 6l7-5 5 4M3 12h11L3 22l15-6" stroke="#3c6cc8" stroke-width="2" fill="none" stroke-linejoin="round"/></g><g transform="translate(1108,69)"><path d="M2 22l2-6 13-14 4 4L7 20z" fill="#f4b82c" stroke="#c08010"/><path d="M17 2l4 4 2-2-4-4z" fill="#e87040"/><path d="M15 4l4 4" stroke="#eee" stroke-width="2"/><path d="M2 22l1-4 3 3z" fill="#333"/></g><path d="M1138 80h7l-3.5 4z" fill="#3f5fb8"/><g transform="translate(1151,69)"><path d="M22 1l-2 6-13 14-4-4L17 3z" fill="#f4b82c" stroke="#c08010"/><path d="M7 21L3 17 1 19l4 4z" fill="#e87040"/><path d="M9 19l-4-4" stroke="#eee" stroke-width="2"/><path d="M22 1l-4 1 3 3z" fill="#333"/></g><g transform="translate(1191,73)"><path d="M3 0v16M18 0v15M3 8h15" stroke="#3c6cc8" stroke-width="1.2"/><rect x="0" y="5" width="6" height="6" fill="#fff" stroke="#3c6cc8" stroke-width="1.6"/><rect x="2" y="7" width="2" height="2" fill="#3c6cc8"/><rect x="15" y="5" width="6" height="6" fill="#fff" stroke="#3c6cc8" stroke-width="1.6"/><rect x="17" y="7" width="2" height="2" fill="#3c6cc8"/></g><g transform="translate(1223,69)"><path d="M4 6h14M18 0v22M18 6h6" stroke="#3c6cc8" stroke-width="1.2"/><rect x="1" y="3" width="6" height="6" fill="#fff" stroke="#3c6cc8" stroke-width="1.6"/><rect x="3" y="5" width="2" height="2" fill="#3c6cc8"/><rect x="15" y="3" width="6" height="6" fill="#fff" stroke="#3c6cc8" stroke-width="1.6"/><rect x="17" y="5" width="2" height="2" fill="#3c6cc8"/><rect x="15" y="16" width="6" height="6" fill="#fff" stroke="#3c6cc8" stroke-width="1.6"/><rect x="17" y="18" width="2" height="2" fill="#3c6cc8"/></g><g transform="translate(1255,69)"><path d="M4 5h16l0 13z" fill="#f08040"/><path d="M6 8h12M8 11h10M11 14h7" stroke="#fff" stroke-width="1.2"/><path d="M20 0v5h4" stroke="#3c6cc8" stroke-width="1.2" fill="none"/><rect x="0" y="2" width="6" height="6" fill="#fff" stroke="#3c6cc8" stroke-width="1.6"/><rect x="2" y="4" width="2" height="2" fill="#3c6cc8"/><rect x="14" y="2" width="6" height="6" fill="#fff" stroke="#3c6cc8" stroke-width="1.6"/><rect x="16" y="4" width="2" height="2" fill="#3c6cc8"/><rect x="14" y="15" width="6" height="6" fill="#fff" stroke="#3c6cc8" stroke-width="1.6"/><rect x="16" y="17" width="2" height="2" fill="#3c6cc8"/></g><g transform="translate(1894,30)"><rect x="0.5" y="0.5" width="19" height="19" rx="1" fill="#3a86e0" stroke="#2a6ac0"/><path d="M11 3h6v6l-2-2-3 3-2-2 3-3zM9 17H3v-6l2 2 3-3 2 2-3 3z" fill="#fff"/></g></svg>
<svg class="a" style="left:2px;top:3px" width="21" height="21" viewBox="0 0 40 40"><g><rect x="2" y="2" width="36" height="36" rx="3" fill="#f2f2f2"/><path d="M12 38C16 31 22 31 27 26 32 20 33 15 38 12V38z" fill="#c4c4c4"/><path d="M2 20C7 17 11 19 13 14 15 9 16 5 20 2h6C21 5 21 11 18 16 14 22 8 21 2 26z" fill="#2a78c8"/><path d="M5 38C8 31 15 28 21 25 27 22 28 13 38 8v7C33 18 31 24 26 28 21 32 15 31 11 38z" fill="#ff7a10"/><path d="M28 18C30 14 33 11 38 8v4C34 14 32 16 30 19z" fill="#ffd000"/><rect x="2" y="2" width="36" height="36" rx="5" fill="none" stroke="#1a5aa0" stroke-width="4"/></g></svg>
<div class="t" style="left:30px;top:5.5px;font-size:15.4px;color:#000">FB_Rob.pdf - 福昕PDF阅读器</div>
<div class="a" style="left:1797px;top:2px;width:39px;height:22px;border:1px solid #4c5a70;border-radius:3px;background:linear-gradient(#c4d6ec 0,#b8cce6 45%,#98b2d2 46%,#a8c2e0 100%);box-shadow:inset 0 0 0 1px rgba(255,255,255,.55)"><div class="a" style="left:13px;top:11px;width:12px;height:5px;background:#fff;border:1px solid #404a58;border-radius:1px"></div></div>
<div class="a" style="left:1838px;top:2px;width:39px;height:22px;border:1px solid #4c5a70;border-radius:3px;background:linear-gradient(#c4d6ec 0,#b8cce6 45%,#98b2d2 46%,#a8c2e0 100%);box-shadow:inset 0 0 0 1px rgba(255,255,255,.55)"><div class="a" style="left:17px;top:4px;width:10px;height:10px;border:2px solid #fff;outline:1px solid #404a58"></div><div class="a" style="left:12px;top:8px;width:10px;height:10px;border:2px solid #fff;background:#a8c0dc;outline:1px solid #404a58"></div></div>
<div class="a" style="left:1879px;top:2px;width:39px;height:22px;border:1px solid #4c5a70;border-radius:3px;background:linear-gradient(#e8a090 0,#e08a78 45%,#c04020 46%,#d86848 100%);box-shadow:inset 0 0 0 1px rgba(255,255,255,.55)"><svg class="a" style="left:11px;top:3px" width="16" height="15"><path d="M2 2l12 11M14 2L2 13" stroke="#404a58" stroke-width="6"/><path d="M2 2l12 11M14 2L2 13" stroke="#fff" stroke-width="4"/></svg></div>
<div class="a" style="left:1879px;top:2px;width:39px;height:22px;border:1px solid #4a1a20;border-radius:3px"></div>
<svg class="a" style="left:3px;top:105px" width="4" height="14"><rect x="0" y="0" width="1" height="1" fill="#a4a9bf"/><rect x="2" y="0" width="1" height="1" fill="#a4a9bf"/><rect x="0" y="2" width="1" height="1" fill="#a4a9bf"/><rect x="2" y="2" width="1" height="1" fill="#a4a9bf"/><rect x="0" y="4" width="1" height="1" fill="#a4a9bf"/><rect x="2" y="4" width="1" height="1" fill="#a4a9bf"/><rect x="0" y="6" width="1" height="1" fill="#a4a9bf"/><rect x="2" y="6" width="1" height="1" fill="#a4a9bf"/><rect x="0" y="8" width="1" height="1" fill="#a4a9bf"/><rect x="2" y="8" width="1" height="1" fill="#a4a9bf"/><rect x="0" y="10" width="1" height="1" fill="#a4a9bf"/><rect x="2" y="10" width="1" height="1" fill="#a4a9bf"/><rect x="0" y="12" width="1" height="1" fill="#a4a9bf"/><rect x="2" y="12" width="1" height="1" fill="#a4a9bf"/></svg>
<div class="t" style="left:18px;top:103px;font-size:14px;color:#000">文件<span style="margin-left:3px;letter-spacing:1px">(F)</span></div>
<div class="t" style="left:87px;top:103px;font-size:14px;color:#000">编辑<span style="margin-left:3px;letter-spacing:1px">(E)</span></div>
<div class="t" style="left:155px;top:103px;font-size:14px;color:#000">视图<span style="margin-left:3px;letter-spacing:1px">(V)</span></div>
<div class="t" style="left:224px;top:103px;font-size:14px;color:#000">工具<span style="margin-left:3px;letter-spacing:1px">(T)</span></div>
<div class="t" style="left:293px;top:103px;font-size:14px;color:#000">注释<span style="margin-left:3px;letter-spacing:1px">(C)</span></div>
<div class="t" style="left:362px;top:103px;font-size:14px;color:#000">表单<span style="margin-left:3px;letter-spacing:1px">(M)</span></div>
<div class="t" style="left:431px;top:103px;font-size:14px;color:#000">帮助<span style="margin-left:3px;letter-spacing:1px">(H)</span></div>
<svg class="a" style="left:0;top:125px" width="1920" height="27"><defs><linearGradient id="tg" x1="0" y1="0" x2="0" y2="1"><stop offset="0" stop-color="#ccd4f6"/><stop offset="1" stop-color="#b6c2ee"/></linearGradient><linearGradient id="ta" x1="0" y1="0" x2="0" y2="1"><stop offset="0" stop-color="#ffffff"/><stop offset="1" stop-color="#e6ecfc"/></linearGradient></defs><defs><linearGradient id="tbt" x1="0" y1="0" x2="0" y2="1"><stop offset="0" stop-color="#6a80c8"/><stop offset=".45" stop-color="#7088d0"/><stop offset="1" stop-color="#8ea2e2"/></linearGradient></defs><rect x="0" y="0" width="1920" height="5" fill="url(#tbt)"/><path d="M3 24 L12 6 Q15 3 19 3 L149 3 Q153 3 156 6 L165 24 Z" fill="url(#tg)" stroke="#7d96da" stroke-width="1"/><path d="M153 24 L162 6 Q165 3 169 3 L300 3 Q304 3 307 6 L316 24 Z" fill="url(#tg)" stroke="#7d96da" stroke-width="1"/><path d="M304 24 L313 6 Q316 3 320 3 L451 3 Q455 3 458 6 L467 24 Z" fill="url(#tg)" stroke="#7d96da" stroke-width="1"/><path d="M455 24 L464 6 Q467 3 471 3 L602 3 Q606 3 609 6 L618 24 Z" fill="url(#tg)" stroke="#7d96da" stroke-width="1"/><path d="M606 24 L615 6 Q618 3 622 3 L754 3 Q758 3 761 6 L770 24 Z" fill="url(#tg)" stroke="#7d96da" stroke-width="1"/><path d="M154 24 L159 14 L164 24 Z" fill="#d4dcf6"/><path d="M305 24 L310 14 L315 24 Z" fill="#d4dcf6"/><path d="M456 24 L461 14 L466 24 Z" fill="#d4dcf6"/><path d="M607 24 L612 14 L617 24 Z" fill="#d4dcf6"/><rect x="0" y="24" width="757" height="1" fill="#7d96da"/><rect x="947" y="24" width="973" height="1" fill="#7d96da"/><path d="M757 25 L767 6 Q770 3 774 3 L926 3 Q931 3 934 7 L947 25 Z" fill="url(#ta)"/><path d="M757 25 L767 6 Q770 3 774 3 L926 3 Q931 3 934 7 L947 25" fill="none" stroke="#7d96da" stroke-width="1"/><circle cx="930" cy="16" r="6" fill="#eef2fc" stroke="#8aa2dc"/><path d="M927 13l6 6M933 13l-6 6" stroke="#5a7ad0" stroke-width="1.2"/><path d="M1742 13h11l-5.5 5z" fill="#4a6ad0"/></svg>
<div class="t" style="left:17.5px;top:132px;font-size:13px;font-family:'Liberation Mono',monospace;color:#000">PROFINET Proje...</div>
<div class="t" style="left:168.75px;top:132px;font-size:13px;font-family:'Liberation Mono',monospace;color:#000">FB_Rob_PN_A.pdf</div>
<div class="t" style="left:320px;top:132px;font-size:13px;font-family:'Liberation Mono',monospace;color:#000">FB_Rob_PN_E.pdf</div>
<div class="t" style="left:471px;top:132px;font-size:13px;font-family:'Liberation Mono',monospace;color:#000">FB_Rob_Fuegen.pdf</div>
<div class="t" style="left:622px;top:132px;font-size:13px;font-family:'Liberation Mono',monospace;color:#000">FB_RobFolge_8.pdf</div>
<div class="t" style="left:768.75px;top:132px;font-size:13px;font-family:'Liberation Mono',monospace;color:#000">FB_Rob.pdf</div>
<div class="a" style="left:1760px;top:125px;width:160px;height:25px;background:linear-gradient(#fbdc88 0,#f9d674 42%,#f6c034 46%,#f7c64a 100%)"></div>
<svg class="a" style="left:1760px;top:125px" width="40" height="25"><path d="M1 8l18-6 6 23H4z" fill="none" stroke="#e6c070" stroke-width="1"/><path d="M6 5l20-2 4 22" fill="none" stroke="#e8c878" stroke-width="1"/></svg>
<div class="t" style="left:1763px;top:131.5px;font-size:13px;color:#7a1010">传单随心印 低至0.12元/张</div>
<svg class="a" style="left:1900px;top:138px" width="20" height="14"><path d="M20 0L6 14h14z" fill="#fff"/><path d="M20 0L8 12" stroke="#888" stroke-width="1.5"/></svg>
<svg class="a" style="left:0;top:152px" width="28" height="280"><path d="M16 8v10l6-5z" fill="#4060c0"/><g transform="translate(5,35)"><path d="M1 1h12l5 5v16H1z" fill="#f4f6fa" stroke="#8a8f99"/><path d="M7 10h9M7 13h9M3 16h13M3 19h13" stroke="#c0c6d0"/><path d="M3 0h5v14l-2.5-2L3 14z" fill="#7cc030" stroke="#5a9a20" stroke-width=".6"/></g><g transform="translate(5,78)"><path d="M1 4h12v18H1z" fill="#f4f6fa" stroke="#8a8f99"/><path d="M4 1h10l4 4v14H4z" fill="#f6f8fc" stroke="#8a8f99"/><path d="M7 8h8M7 11h8M7 14h8" stroke="#c0c6d0"/></g><g transform="translate(3,120)"><path d="M0 14l13-7 9 9-13 7z" fill="#d4e2f4" stroke="#8a8f99"/><path d="M1 9l13-7 8 9-13 7z" fill="#fafbfc" stroke="#8a8f99"/><path d="M4 10l10-5 5 6" fill="none" stroke="#d8dce4"/></g><g transform="translate(7,164)"><path d="M6 8v10c0 3 4 3 4 0V5c0-5-8-5-8 0v14c0 6 11 6 11 0V7" fill="none" stroke="#6a8cb8" stroke-width="1.8"/><path d="M6 8v10c0 3 4 3 4 0V5c0-5-8-5-8 0v14c0 6 11 6 11 0V7" fill="none" stroke="#c8daf0" stroke-width=".6"/></g><g transform="translate(2,208)"><rect x="0" y="0" width="13" height="9" rx="1" fill="#5a9ae8"/><path d="M2 9v4l3-4z" fill="#5a9ae8"/><path d="M2 3h9M2 6h9" stroke="#fff" stroke-width=".8"/><rect x="8" y="6" width="15" height="10" rx="1" fill="#f8c838" stroke="#d8a010" stroke-width=".6"/><path d="M17 16v5l-4-5z" fill="#f8c838"/><path d="M10 9h11M10 12h11" stroke="#fff" stroke-width=".8"/></g><g transform="translate(3,249)"><path d="M1 1h14l4 4v17H1z" fill="#f4f6fa" stroke="#8a8f99"/><path d="M4 5v3M7 5v3M10 5v3" stroke="#999"/><path d="M5 21l16-16 2 2L7 23z" fill="#3a6ac0" stroke="#23438a" stroke-width=".6"/><path d="M5 21l-1 3 3-1z" fill="#f4b030"/></g></svg>
<div class="a" style="left:1899px;top:152px;width:21px;height:7px;background:#8ea1e2"></div>
<svg class="a" style="left:1899px;top:159px" width="21" height="20"><path d="M5.5 13l4.5-5 4.5 5z" fill="#222"/></svg>
<svg class="a" style="left:1899px;top:1010px" width="21" height="20"><path d="M5.5 9l4.5 5 4.5-5z" fill="#222"/></svg>
<div class="a" style="left:1900px;top:525px;width:19px;height:19px;border:1px solid #8a8a8a;border-radius:2px;background:linear-gradient(90deg,#fafafa,#e4e4e8)"><div class="a" style="left:4px;top:4px;width:9px;height:1.5px;background:#333"></div><div class="a" style="left:4px;top:8px;width:9px;height:1.5px;background:#333"></div><div class="a" style="left:4px;top:12px;width:9px;height:1.5px;background:#333"></div></div>
<div class="a" style="left:531px;top:152px;width:4px;height:1px;background:#c4c4c4"></div>
<div class="a" style="left:550px;top:152px;width:4px;height:1px;background:#c4c4c4"></div>
<div class="a" style="left:566px;top:152px;width:4px;height:1px;background:#c4c4c4"></div>
<div class="a" style="left:585px;top:152px;width:4px;height:1px;background:#c4c4c4"></div>
<div class="a" style="left:606px;top:152px;width:4px;height:1px;background:#c4c4c4"></div>
<div class="a" style="left:623px;top:152px;width:4px;height:1px;background:#c4c4c4"></div>
<div class="a" style="left:634px;top:152px;width:4px;height:1px;background:#c4c4c4"></div>
<div class="a" style="left:651px;top:152px;width:4px;height:1px;background:#c4c4c4"></div>
<div class="a" style="left:578.5px;top:152px;width:3.5px;height:6px;background:#000"></div>
<div class="t" style="left:507.5px;top:182.83px;font-size:18.5px;color:#000;">Robot overview</div>
<div class="a" style="left:509px;top:199px;width:126px;height:2px;background:#000"></div>
<div class="t" style="left:507.5px;top:285.33px;font-size:18.5px;color:#000;">Roboter_14 (in 002 Roboter)</div>
<div class="t" style="left:507.5px;top:350.83px;font-size:18.5px;color:#000;">Robot detailed display</div>
<div class="a" style="left:509px;top:367px;width:181px;height:2px;background:#000"></div>
<div class="t" style="left:507.5px;top:776.83px;font-size:18.5px;color:#000;">Roboter_06 (in 002 Roboter)</div>
<div class="t" style="left:507.5px;top:842.83px;font-size:18.5px;color:#000;">Plant overview</div>
<div class="a" style="left:509px;top:859px;width:119px;height:2px;background:#000"></div>
<div class="a" style="left:516px;top:880px;width:109px;height:25px;background:#ffff80;border:2px solid #8c8c8c"></div>
<div class="t" style="left:516px;top:884.6px;width:109px;text-align:center;font-size:16px;color:#5a0010;letter-spacing:0px;transform:scaleX(0.86)">1050R01</div>
<div class="a" style="left:516px;top:905px;width:109px;height:127px;background:#b6b6b6"></div>
<div class="a" style="left:509px;top:465px;width:861px;height:299px;background:#b0b0b0"></div>
<div class="a" style="left:509px;top:465px;width:4px;height:299px;background:#c4c4c4"></div>
<div class="a" style="left:513px;top:465px;width:857px;height:1px;background:#b8b8b8"></div>
<div class="a" style="left:513px;top:466px;width:856px;height:4px;background:#808080"></div>
<div class="a" style="left:513px;top:466px;width:4px;height:297px;background:#808080"></div>
<div class="a" style="left:513px;top:759px;width:856px;height:4px;background:#808080"></div>
<div class="a" style="left:1365px;top:466px;width:4px;height:297px;background:#808080"></div>
<div class="a" style="left:521px;top:476px;width:120px;height:38px;background:#ffff99;border:1px solid #8a8a8a"></div>
<div class="t" style="left:521px;top:488.59px;width:120px;text-align:center;font-size:12px;font-weight:bold;color:#000;letter-spacing:-0.9px;">210050R01</div>
<div class="a" style="left:646px;top:476px;width:85px;height:38px;background:#c0c0c0;border:1px solid #1a1a1a"><div class="a" style="left:0;top:0;right:0;bottom:0;border-style:solid;border-width:3px 3px 3px 3px;border-color:#fff #000 #000 #fff"></div><div class="a" style="left:3px;top:3px;right:3px;bottom:3px;border-top:1px solid #404040;border-left:1px solid #404040"></div></div>
<div class="t" style="left:653px;top:484.64px;font-size:9px;font-weight:bold;color:#000;letter-spacing:0.2px;">ohne</div>
<div class="t" style="left:653px;top:497.54px;font-size:9px;font-weight:bold;color:#000;letter-spacing:0.2px;">Roboter</div>
<div class="a" style="left:713.8px;top:482px;width:12.4px;height:12.4px;background:#ffff00;border-radius:50%;border:1px solid #606000"></div>
<div class="a" style="left:738px;top:476px;width:32px;height:37px;background:#c0c0c0;border:1px solid #505050"></div>
<div class="t" style="left:738px;top:482.2px;width:32px;text-align:center;font-size:8.5px;font-weight:bold;color:#000;letter-spacing:0px;">E2</div>
<div class="t" style="left:738px;top:499.3px;width:32px;text-align:center;font-size:8.5px;font-weight:bold;color:#000;letter-spacing:0px;">E22</div>
<div class="a" style="left:833px;top:476px;width:56px;height:37px;background:#c0c0c0;border:1px solid #505050"></div>
<div class="t" style="left:833px;top:490.24px;width:56px;text-align:center;font-size:9px;font-weight:bold;color:#000;letter-spacing:0px;">Auto</div>
<div class="a" style="left:892px;top:476px;width:56px;height:37px;background:#c0c0c0;border:1px solid #505050"></div>
<div class="t" style="left:892px;top:490.24px;width:56px;text-align:center;font-size:9px;font-weight:bold;color:#000;letter-spacing:0px;">PF0</div>
<div class="a" style="left:951px;top:476px;width:56px;height:37px;background:#c0c0c0;border:1px solid #505050"></div>
<div class="t" style="left:951px;top:490.24px;width:56px;text-align:center;font-size:9px;font-weight:bold;color:#000;letter-spacing:0px;">MaSi</div>
<div class="a" style="left:1010px;top:476px;width:56px;height:37px;background:#c0c0c0;border:1px solid #505050"></div>
<div class="t" style="left:1010px;top:490.24px;width:56px;text-align:center;font-size:9px;font-weight:bold;color:#000;letter-spacing:0px;">Antriebe</div>
<div class="a" style="left:1069px;top:476px;width:56px;height:37px;background:#c0c0c0;border:1px solid #505050"></div>
<div class="t" style="left:1069px;top:490.24px;width:56px;text-align:center;font-size:9px;font-weight:bold;color:#000;letter-spacing:0px;">FK</div>
<div class="a" style="left:1128px;top:476px;width:56px;height:37px;background:#c0c0c0;border:1px solid #505050"></div>
<div class="t" style="left:1128px;top:479.11px;width:56px;text-align:center;font-size:11px;font-weight:bold;color:#000;letter-spacing:0.4px;">Folge</div>
<div class="t" style="left:1129.5px;top:499.54px;font-size:9px;font-weight:bold;color:#000;letter-spacing:0px;">0</div>
<div class="t" style="left:1160.5px;top:499.54px;font-size:9px;font-weight:bold;color:#000;letter-spacing:0px;">0</div>
<div class="a" style="left:1186px;top:476px;width:57px;height:38px;background:#c0c0c0;border:1px solid #1a1a1a"><div class="a" style="left:0;top:0;right:0;bottom:0;border-style:solid;border-width:3px 3px 3px 3px;border-color:#fff #000 #000 #fff"></div><div class="a" style="left:3px;top:3px;right:3px;bottom:3px;border-top:1px solid #404040;border-left:1px solid #404040"></div></div>
<div class="t" style="left:1187px;top:491.34px;width:53px;text-align:center;font-size:9px;font-weight:bold;color:#000;letter-spacing:0.2px;">Start</div>
<div class="a" style="left:1245px;top:476px;width:57px;height:38px;background:#c0c0c0;border:1px solid #1a1a1a"><div class="a" style="left:0;top:0;right:0;bottom:0;border-style:solid;border-width:3px 3px 3px 3px;border-color:#fff #000 #000 #fff"></div><div class="a" style="left:3px;top:3px;right:3px;bottom:3px;border-top:1px solid #404040;border-left:1px solid #404040"></div></div>
<div class="t" style="left:1246px;top:491.34px;width:53px;text-align:center;font-size:9px;font-weight:bold;color:#000;letter-spacing:0.2px;">Halt</div>
<div class="a" style="left:1304px;top:476px;width:57px;height:38px;background:#c0c0c0;border:1px solid #1a1a1a"><div class="a" style="left:0;top:0;right:0;bottom:0;border-style:solid;border-width:3px 3px 3px 3px;border-color:#fff #000 #000 #fff"></div><div class="a" style="left:3px;top:3px;right:3px;bottom:3px;border-top:1px solid #404040;border-left:1px solid #404040"></div></div>
<div class="t" style="left:1305px;top:491.94px;width:53px;text-align:center;font-size:9px;font-weight:bold;color:#000;letter-spacing:0.2px;">Wartung</div>
<div class="a" style="left:520px;top:518px;width:212px;height:40px;background:#c0c0c0;border:1px dotted #333"><div class="a" style="left:0;top:0;right:0;bottom:0;border-style:solid;border-width:5px 4px 4px 5px;border-color:#000 #fff #fff #000"></div></div>
<div class="t" style="left:521px;top:531.96px;width:211px;text-align:center;font-size:14px;font-weight:normal;color:#000;letter-spacing:0.1px;-webkit-text-stroke:0.3px #000">Roboter EAs</div>
<div class="a" style="left:738px;top:520px;width:57px;height:38px;background:#c0c0c0;border:1px solid #1a1a1a"><div class="a" style="left:0;top:0;right:0;bottom:0;border-style:solid;border-width:3px 3px 3px 3px;border-color:#fff #000 #000 #fff"></div><div class="a" style="left:3px;top:3px;right:3px;bottom:3px;border-top:1px solid #404040;border-left:1px solid #404040"></div></div>
<div class="t" style="left:739px;top:529.64px;width:53px;text-align:center;font-size:9px;font-weight:bold;color:#000;letter-spacing:0.2px;">Halt vor</div>
<div class="t" style="left:739px;top:541.54px;width:53px;text-align:center;font-size:9px;font-weight:bold;color:#000;letter-spacing:0.2px;">Prozess</div>
<div class="a" style="left:798px;top:520px;width:57px;height:38px;background:#c0c0c0;border:1px solid #1a1a1a"><div class="a" style="left:0;top:0;right:0;bottom:0;border-style:solid;border-width:3px 3px 3px 3px;border-color:#fff #000 #000 #fff"></div><div class="a" style="left:3px;top:3px;right:3px;bottom:3px;border-top:1px solid #404040;border-left:1px solid #404040"></div></div>
<div class="t" style="left:799px;top:529.64px;width:53px;text-align:center;font-size:9px;font-weight:bold;color:#000;letter-spacing:0.2px;">WZG-</div>
<div class="t" style="left:799px;top:541.54px;width:53px;text-align:center;font-size:9px;font-weight:bold;color:#000;letter-spacing:0.2px;">Wechsel</div>
<div class="a" style="left:858px;top:520px;width:57px;height:38px;background:#c0c0c0;border:1px solid #1a1a1a"><div class="a" style="left:0;top:0;right:0;bottom:0;border-style:solid;border-width:3px 3px 3px 3px;border-color:#fff #000 #000 #fff"></div><div class="a" style="left:3px;top:3px;right:3px;bottom:3px;border-top:1px solid #404040;border-left:1px solid #404040"></div></div>
<div class="t" style="left:859px;top:529.64px;width:53px;text-align:center;font-size:9px;font-weight:bold;color:#000;letter-spacing:0.2px;">Referenz-</div>
<div class="t" style="left:859px;top:541.54px;width:53px;text-align:center;font-size:9px;font-weight:bold;color:#000;letter-spacing:0.2px;">fahrt</div>
<div class="a" style="left:951px;top:520px;width:56px;height:37px;background:#c0c0c0;border:1px solid #505050"></div>
<div class="t" style="left:951px;top:534.74px;width:56px;text-align:center;font-size:9px;font-weight:bold;color:#000;letter-spacing:0px;">K16A</div>
<div class="a" style="left:1010px;top:520px;width:56px;height:37px;background:#c0c0c0;border:1px solid #505050"></div>
<div class="t" style="left:1010px;top:534.74px;width:56px;text-align:center;font-size:9px;font-weight:bold;color:#000;letter-spacing:0px;">K36</div>
<div class="a" style="left:1127px;top:520px;width:57px;height:38px;background:#c0c0c0;border:1px solid #1a1a1a"><div class="a" style="left:0;top:0;right:0;bottom:0;border-style:solid;border-width:3px 3px 3px 3px;border-color:#fff #000 #000 #fff"></div><div class="a" style="left:3px;top:3px;right:3px;bottom:3px;border-top:1px solid #404040;border-left:1px solid #404040"></div></div>
<div class="t" style="left:1128px;top:531.42px;width:53px;text-align:center;font-size:7.5px;font-weight:normal;color:#111;letter-spacing:0.3px;-webkit-text-stroke:0.15px #111">Roboter</div>
<div class="t" style="left:1128px;top:538.66px;width:53px;text-align:center;font-size:8px;font-weight:normal;color:#111;letter-spacing:0.25px;-webkit-text-stroke:0.15px #111">archivieren</div>
<div class="a" style="left:1186px;top:520px;width:57px;height:38px;background:#c0c0c0;border:1px solid #1a1a1a"><div class="a" style="left:0;top:0;right:0;bottom:0;border-style:solid;border-width:3px 3px 3px 3px;border-color:#fff #000 #000 #fff"></div><div class="a" style="left:3px;top:3px;right:3px;bottom:3px;border-top:1px solid #404040;border-left:1px solid #404040"></div></div>
<div class="t" style="left:1187px;top:535.24px;width:53px;text-align:center;font-size:9px;font-weight:bold;color:#000;letter-spacing:0.2px;">Zur&uuml;ck</div>
<div class="a" style="left:520px;top:567px;width:844px;height:2px;background:#f0f0f0"></div>
<div class="a" style="left:521px;top:573px;width:332px;height:20px;background:#ffff99;border-bottom:1px solid #808080"></div>
<div class="t" style="left:666.8px;top:576.97px;font-size:13px;font-weight:normal;color:#333;letter-spacing:0px;">Eing&auml;nge</div>
<div class="a" style="left:521px;top:595px;width:332px;height:160px;background:#fff;border:1px solid #333"></div>
<div class="a" style="left:521px;top:595px;width:22px;height:160px;background:#c0c0c0;border:1px solid #333;border-right:2px solid #000"></div>
<div class="a" style="left:521px;top:614px;width:22px;height:2px;background:#000"></div>
<div class="a" style="left:521px;top:634px;width:22px;height:2px;background:#000"></div>
<div class="a" style="left:521px;top:654px;width:22px;height:2px;background:#000"></div>
<div class="a" style="left:521px;top:674px;width:22px;height:2px;background:#000"></div>
<div class="a" style="left:521px;top:694px;width:22px;height:2px;background:#000"></div>
<div class="a" style="left:521px;top:714px;width:22px;height:2px;background:#000"></div>
<div class="a" style="left:521px;top:734px;width:22px;height:2px;background:#000"></div>
<div class="t" style="left:586.7px;top:666.24px;font-size:15px;font-weight:normal;color:#000;letter-spacing:0px;">Folge</div>
<div class="t" style="left:692.5px;top:668.96px;font-size:14px;font-weight:normal;color:#444;letter-spacing:0px;">0</div>
<div class="a" style="left:908px;top:573px;width:332px;height:20px;background:#ffff99;border-bottom:1px solid #808080"></div>
<div class="t" style="left:1059px;top:576.97px;font-size:13px;font-weight:normal;color:#333;letter-spacing:0px;">Ausg&auml;nge</div>
<div class="a" style="left:908px;top:595px;width:332px;height:160px;background:#fff;border:1px solid #333"></div>
<div class="a" style="left:908px;top:595px;width:22px;height:160px;background:#c0c0c0;border:1px solid #333;border-right:2px solid #000"></div>
<div class="a" style="left:908px;top:614px;width:22px;height:2px;background:#000"></div>
<div class="a" style="left:908px;top:634px;width:22px;height:2px;background:#000"></div>
<div class="a" style="left:908px;top:654px;width:22px;height:2px;background:#000"></div>
<div class="a" style="left:908px;top:674px;width:22px;height:2px;background:#000"></div>
<div class="a" style="left:908px;top:694px;width:22px;height:2px;background:#000"></div>
<div class="a" style="left:908px;top:714px;width:22px;height:2px;background:#000"></div>
<div class="a" style="left:908px;top:734px;width:22px;height:2px;background:#000"></div>
<div class="t" style="left:973.7px;top:666.24px;font-size:15px;font-weight:normal;color:#000;letter-spacing:0px;">Folge</div>
<div class="t" style="left:1079.5px;top:668.96px;font-size:14px;font-weight:normal;color:#444;letter-spacing:0px;">0</div>
<div class="a" style="left:860px;top:573px;width:42px;height:20px;background:#efefef;border:1px solid #444"></div>
<div class="t" style="left:860px;top:577.71px;width:42px;text-align:center;font-size:11px;font-weight:normal;color:#222;letter-spacing:0px;">0</div>
<div class="a" style="left:860px;top:595px;width:42px;height:20px;background:#efefef;border:1px solid #222"></div>
<div class="t" style="left:860px;top:599.71px;width:42px;text-align:center;font-size:11px;font-weight:normal;color:#222;letter-spacing:0px;">1</div>
<div class="a" style="left:860px;top:615px;width:42px;height:20px;background:#efefef;border:1px solid #222"></div>
<div class="t" style="left:860px;top:619.71px;width:42px;text-align:center;font-size:11px;font-weight:normal;color:#222;letter-spacing:0px;">2</div>
<div class="a" style="left:860px;top:635px;width:42px;height:20px;background:#efefef;border:1px solid #222"></div>
<div class="t" style="left:860px;top:639.71px;width:42px;text-align:center;font-size:11px;font-weight:normal;color:#222;letter-spacing:0px;">3</div>
<div class="a" style="left:860px;top:655px;width:42px;height:20px;background:#efefef;border:1px solid #222"></div>
<div class="t" style="left:860px;top:659.71px;width:42px;text-align:center;font-size:11px;font-weight:normal;color:#222;letter-spacing:0px;">4</div>
<div class="a" style="left:860px;top:675px;width:42px;height:20px;background:#efefef;border:1px solid #222"></div>
<div class="t" style="left:860px;top:679.71px;width:42px;text-align:center;font-size:11px;font-weight:normal;color:#222;letter-spacing:0px;">5</div>
<div class="a" style="left:860px;top:695px;width:42px;height:20px;background:#efefef;border:1px solid #222"></div>
<div class="t" style="left:860px;top:699.71px;width:42px;text-align:center;font-size:11px;font-weight:normal;color:#222;letter-spacing:0px;">6</div>
<div class="a" style="left:860px;top:715px;width:42px;height:20px;background:#efefef;border:1px solid #222"></div>
<div class="t" style="left:860px;top:719.71px;width:42px;text-align:center;font-size:11px;font-weight:normal;color:#222;letter-spacing:0px;">7</div>
<div class="a" style="left:860px;top:735px;width:42px;height:20px;background:#efefef;border:1px solid #222"></div>
<div class="t" style="left:860px;top:739.71px;width:42px;text-align:center;font-size:11px;font-weight:normal;color:#222;letter-spacing:0px;">8</div>
<div class="a" style="left:1244px;top:609px;width:57px;height:36px;background:#c0c0c0;border:1px solid #333"><div class="a" style="left:0;top:0;right:0;bottom:0;border-style:solid;border-width:4px 3px 3px 4px;border-color:#000 #fff #fff #000"></div></div>
<div class="t" style="left:1250px;top:617.44px;font-size:9px;font-weight:bold;color:#000;letter-spacing:0px;">Byte</div>
<div class="t" style="left:1250px;top:629.44px;font-size:9px;font-weight:bold;color:#000;letter-spacing:0px;">Adr.</div>
<div class="t" style="left:1284px;top:617.44px;font-size:9px;font-weight:bold;width:8px;text-align:right">0</div>
<div class="t" style="left:1278px;top:630.44px;font-size:9px;font-weight:bold;width:14px;text-align:right">1</div>
<div class="a" style="left:1303px;top:609px;width:58px;height:36px;background:#c0c0c0;border:1px solid #1a1a1a"><div class="a" style="left:0;top:0;right:0;bottom:0;border-style:solid;border-width:3px 3px 3px 3px;border-color:#fff #000 #000 #fff"></div><div class="a" style="left:3px;top:3px;right:3px;bottom:3px;border-top:1px solid #404040;border-left:1px solid #404040"></div></div>
<div class="t" style="left:1309px;top:617.44px;font-size:9px;font-weight:bold;color:#000;letter-spacing:0px;">Byte</div>
<div class="t" style="left:1309px;top:629.44px;font-size:9px;font-weight:bold;color:#000;letter-spacing:0px;">Adr.</div>
<div class="t" style="left:1343px;top:617.44px;font-size:9px;font-weight:bold;width:8px;text-align:right">1</div>
<div class="t" style="left:1337px;top:630.44px;font-size:9px;font-weight:bold;width:14px;text-align:right">9</div>
<div class="a" style="left:1244px;top:648px;width:57px;height:35px;background:#c0c0c0;border:1px solid #1a1a1a"><div class="a" style="left:0;top:0;right:0;bottom:0;border-style:solid;border-width:3px 3px 3px 3px;border-color:#fff #000 #000 #fff"></div><div class="a" style="left:3px;top:3px;right:3px;bottom:3px;border-top:1px solid #404040;border-left:1px solid #404040"></div></div>
<div class="t" style="left:1250px;top:656.44px;font-size:9px;font-weight:bold;color:#000;letter-spacing:0px;">Byte</div>
<div class="t" style="left:1250px;top:668.44px;font-size:9px;font-weight:bold;color:#000;letter-spacing:0px;">Adr.</div>
<div class="t" style="left:1284px;top:656.44px;font-size:9px;font-weight:bold;width:8px;text-align:right">2</div>
<div class="t" style="left:1278px;top:669.44px;font-size:9px;font-weight:bold;width:14px;text-align:right">17</div>
<div class="a" style="left:1303px;top:648px;width:58px;height:35px;background:#c0c0c0;border:1px solid #1a1a1a"><div class="a" style="left:0;top:0;right:0;bottom:0;border-style:solid;border-width:3px 3px 3px 3px;border-color:#fff #000 #000 #fff"></div><div class="a" style="left:3px;top:3px;right:3px;bottom:3px;border-top:1px solid #404040;border-left:1px solid #404040"></div></div>
<div class="t" style="left:1309px;top:656.44px;font-size:9px;font-weight:bold;color:#000;letter-spacing:0px;">Byte</div>
<div class="t" style="left:1309px;top:668.44px;font-size:9px;font-weight:bold;color:#000;letter-spacing:0px;">Adr.</div>
<div class="t" style="left:1343px;top:656.44px;font-size:9px;font-weight:bold;width:8px;text-align:right">3</div>
<div class="t" style="left:1337px;top:669.44px;font-size:9px;font-weight:bold;width:14px;text-align:right">25</div>
<div class="a" style="left:1244px;top:685px;width:57px;height:35px;background:#c0c0c0;border:1px solid #1a1a1a"><div class="a" style="left:0;top:0;right:0;bottom:0;border-style:solid;border-width:3px 3px 3px 3px;border-color:#fff #000 #000 #fff"></div><div class="a" style="left:3px;top:3px;right:3px;bottom:3px;border-top:1px solid #404040;border-left:1px solid #404040"></div></div>
<div class="t" style="left:1250px;top:693.44px;font-size:9px;font-weight:bold;color:#000;letter-spacing:0px;">Byte</div>
<div class="t" style="left:1250px;top:705.44px;font-size:9px;font-weight:bold;color:#000;letter-spacing:0px;">Adr.</div>
<div class="t" style="left:1284px;top:693.44px;font-size:9px;font-weight:bold;width:8px;text-align:right">4</div>
<div class="t" style="left:1278px;top:706.44px;font-size:9px;font-weight:bold;width:14px;text-align:right">33</div>
<div class="a" style="left:1303px;top:685px;width:58px;height:35px;background:#c0c0c0;border:1px solid #1a1a1a"><div class="a" style="left:0;top:0;right:0;bottom:0;border-style:solid;border-width:3px 3px 3px 3px;border-color:#fff #000 #000 #fff"></div><div class="a" style="left:3px;top:3px;right:3px;bottom:3px;border-top:1px solid #404040;border-left:1px solid #404040"></div></div>
<div class="t" style="left:1309px;top:693.44px;font-size:9px;font-weight:bold;color:#000;letter-spacing:0px;">Byte</div>
<div class="t" style="left:1309px;top:705.44px;font-size:9px;font-weight:bold;color:#000;letter-spacing:0px;">Adr.</div>
<div class="t" style="left:1343px;top:693.44px;font-size:9px;font-weight:bold;width:8px;text-align:right">5</div>
<div class="t" style="left:1337px;top:706.44px;font-size:9px;font-weight:bold;width:14px;text-align:right">41</div>
<div class="a" style="left:1244px;top:723px;width:117px;height:34px;background:#c0c0c0;border:1px solid #1a1a1a"><div class="a" style="left:0;top:0;right:0;bottom:0;border-style:solid;border-width:3px 3px 3px 3px;border-color:#fff #000 #000 #fff"></div><div class="a" style="left:3px;top:3px;right:3px;bottom:3px;border-top:1px solid #404040;border-left:1px solid #404040"></div></div>
<div class="t" style="left:1244px;top:735.09px;width:114px;text-align:center;font-size:12px;font-weight:normal;color:#000;letter-spacing:0px;-webkit-text-stroke:0.3px #000">&gt;&gt;</div>
<div class="a" style="left:502px;top:203px;width:869px;height:75px;background:#0000cc"></div>
<div class="a" style="left:506px;top:207px;width:861px;height:67px;background:#5858d8"></div>
<div class="a" style="left:506px;top:207px;width:861px;height:5px;background:#8080ff"></div>
<div class="a" style="left:506px;top:270px;width:861px;height:4px;background:#8080ff"></div>
<div class="a" style="left:506px;top:207px;width:4px;height:67px;background:#8080ff"></div>
<div class="a" style="left:510px;top:212px;width:857px;height:4px;background:#4040c0"></div>
<div class="a" style="left:510px;top:266px;width:857px;height:4px;background:#4040c0"></div>
<div class="a" style="left:510px;top:212px;width:4px;height:58px;background:#4040c0"></div>
<div class="a" style="left:517px;top:223px;width:121px;height:37px;background:#8080cc;border:1px solid #4040c0;border-right-color:#8080ff;border-bottom-color:#8080ff"></div>
<div class="t" style="left:517px;top:235.59px;width:121px;text-align:center;font-size:12px;font-weight:bold;color:#000080;letter-spacing:-0.9px;">210050R01</div>
<div class="a" style="left:643px;top:223px;width:86px;height:38px;background:#6060e0;border:1px solid #0a0a60"><div class="a" style="left:0;top:0;right:0;bottom:0;border-style:solid;border-width:3px 3px 3px 3px;border-color:#8080ff #000080 #000080 #8080ff"></div><div class="a" style="left:3px;top:3px;right:3px;bottom:3px;border-top:1px solid #202090;border-left:1px solid #202090"></div></div>
<div class="t" style="left:650px;top:233.0px;font-size:8.5px;font-weight:bold;color:#000080;letter-spacing:0.2px;">ohne</div>
<div class="t" style="left:650px;top:244.5px;font-size:8.5px;font-weight:bold;color:#000080;letter-spacing:0.2px;">Roboter</div>
<div class="a" style="left:711px;top:229px;width:12.4px;height:12.4px;background:#808080;border-radius:50%;border:1px solid #303060"></div>
<div class="a" style="left:736px;top:223px;width:32px;height:37px;background:#6060e0;border:1px solid #3030a0"></div>
<div class="t" style="left:736px;top:229.0px;width:32px;text-align:center;font-size:8.5px;font-weight:bold;color:#000080;letter-spacing:0px;">E2</div>
<div class="t" style="left:736px;top:246.0px;width:32px;text-align:center;font-size:8.5px;font-weight:bold;color:#000080;letter-spacing:0px;">E22</div>
<div class="a" style="left:831px;top:223px;width:56px;height:37px;background:#6060e0;border:1px solid #3030a0"></div>
<div class="t" style="left:831px;top:236.94px;width:56px;text-align:center;font-size:9px;font-weight:bold;color:#000080;letter-spacing:0px;">Auto</div>
<div class="a" style="left:890px;top:223px;width:56px;height:37px;background:#6060e0;border:1px solid #3030a0"></div>
<div class="t" style="left:890px;top:236.94px;width:56px;text-align:center;font-size:9px;font-weight:bold;color:#000080;letter-spacing:0px;">PF0</div>
<div class="a" style="left:949px;top:223px;width:56px;height:37px;background:#6060e0;border:1px solid #3030a0"></div>
<div class="t" style="left:949px;top:236.94px;width:56px;text-align:center;font-size:9px;font-weight:bold;color:#000080;letter-spacing:0px;">MaSi</div>
<div class="a" style="left:1009px;top:223px;width:56px;height:37px;background:#6060e0;border:1px solid #3030a0"></div>
<div class="t" style="left:1009px;top:236.94px;width:56px;text-align:center;font-size:9px;font-weight:bold;color:#000080;letter-spacing:0px;">Antriebe</div>
<div class="a" style="left:1068px;top:223px;width:56px;height:37px;background:#6060e0;border:1px solid #3030a0"></div>
<div class="t" style="left:1068px;top:236.94px;width:56px;text-align:center;font-size:9px;font-weight:bold;color:#000080;letter-spacing:0px;">FK</div>
<div class="a" style="left:1128px;top:223px;width:56px;height:37px;background:#6060e0;border:1px solid #3030a0"></div>
<div class="t" style="left:1128px;top:227.44px;width:56px;text-align:center;font-size:9px;font-weight:bold;color:#000080;letter-spacing:0.2px;">Folge</div>
<div class="t" style="left:1137px;top:246.06px;font-size:8px;font-weight:bold;color:#000080;letter-spacing:0px;">0</div>
<div class="t" style="left:1166px;top:246.06px;font-size:8px;font-weight:bold;color:#000080;letter-spacing:0px;">0</div>
<div class="a" style="left:1186px;top:223px;width:58px;height:38px;background:#6060e0;border:1px solid #0a0a60"><div class="a" style="left:0;top:0;right:0;bottom:0;border-style:solid;border-width:3px 3px 3px 3px;border-color:#8080ff #000080 #000080 #8080ff"></div><div class="a" style="left:3px;top:3px;right:3px;bottom:3px;border-top:1px solid #202090;border-left:1px solid #202090"></div></div>
<div class="t" style="left:1187px;top:237.94px;width:54px;text-align:center;font-size:9px;font-weight:bold;color:#000080;letter-spacing:0.2px;">Start</div>
<div class="a" style="left:1245px;top:223px;width:58px;height:38px;background:#6060e0;border:1px solid #0a0a60"><div class="a" style="left:0;top:0;right:0;bottom:0;border-style:solid;border-width:3px 3px 3px 3px;border-color:#8080ff #000080 #000080 #8080ff"></div><div class="a" style="left:3px;top:3px;right:3px;bottom:3px;border-top:1px solid #202090;border-left:1px solid #202090"></div></div>
<div class="t" style="left:1246px;top:237.94px;width:54px;text-align:center;font-size:9px;font-weight:bold;color:#000080;letter-spacing:0.2px;">Halt</div>
<div class="a" style="left:1305px;top:223px;width:58px;height:38px;background:#6060e0;border:1px solid #0a0a60"><div class="a" style="left:0;top:0;right:0;bottom:0;border-style:solid;border-width:3px 3px 3px 3px;border-color:#8080ff #000080 #000080 #8080ff"></div><div class="a" style="left:3px;top:3px;right:3px;bottom:3px;border-top:1px solid #202090;border-left:1px solid #202090"></div></div>
<div class="t" style="left:1306px;top:237.94px;width:54px;text-align:center;font-size:9px;font-weight:bold;color:#000080;letter-spacing:0.2px;">Wartung</div>
<svg class="a" style="left:516px;top:905px" width="109" height="127"><g transform="translate(-516,-905)" fill="#d8d8d8" stroke="#000" stroke-width="1"><ellipse cx="573.7" cy="941.3" rx="33.5" ry="31"/><path d="M545 930a31 29 0 0 1 57 0" fill="none"/><ellipse cx="573.7" cy="941.3" rx="30.5" ry="28" fill="none"/><rect x="567" y="910.5" width="12.5" height="9"/><path d="M567 913h12.5M568 916h10" /><path d="M563 937v-6l4-3h12l4 3v6z"/><rect x="569" y="919.5" width="10.5" height="29"/><rect x="571.5" y="927" width="4.5" height="21"/><rect x="588" y="933.5" width="11" height="6.5"/><path d="M591 933.5v6.5"/><path d="M584 938l4-3"/><rect x="544.8" y="936.5" width="15.6" height="14"/><ellipse cx="552.6" cy="943.8" rx="5.5" ry="4.8"/><rect x="533.7" y="949" width="12" height="12"/><rect x="544.8" y="953.5" width="12.6" height="19"/><path d="M560 950h18v2.5h-18z" fill="#000"/><path d="M560 952v18M577 952v16M586 953v10M559 968h30"/><path d="M548 958q25 18 52 -6" fill="none"/><path d="M590 962l8-4" /><rect x="566.3" y="972.8" width="16.3" height="58"/><rect x="566.3" y="981" width="16.3" height="5" fill="#000"/><path d="M566.3 989h16.3M566.3 997h16.3M566.3 1003h16.3M568 1010h12M561 1017h25M580 1012v16M568 1012v18"/><rect x="566.3" y="1026" width="16.3" height="4" fill="#000"/></g></svg><svg class="a" style="left:1240px;top:950px;filter:drop-shadow(1px 1px 0.6px rgba(0,0,0,.8))" width="100" height="80"><g transform="translate(-1240,-950)"><path d="M1281 960c-15 0 -27 10.5 -27 23.5 0 7.5 4 14 10.5 18.5l-5 9 11-6c3.5 1.2 7 1.8 10.5 1.8 15 0 27-10.5 27-23.5S1296 960 1281 960z" fill="#fff" stroke="#cfcfcf" stroke-width=".6"/><path d="M1306.5 980c-13 0-23.5 9.3-23.5 21s10.5 21 23.5 21c2.8 0 5.5-.4 8-1.2l9.5 4.8-3.2-8.3c5.5-3.8 9.2-9.6 9.2-16.3 0-11.7-10.5-21-23.5-21z" fill="#fff" stroke="#cfcfcf" stroke-width=".6"/><circle cx="1271" cy="974" r="2.6" fill="#fff" stroke="#777" stroke-width="1"/><circle cx="1292" cy="974" r="2.6" fill="#fff" stroke="#777" stroke-width="1"/><circle cx="1298.5" cy="993" r="2.4" fill="#fff" stroke="#777" stroke-width="1"/><circle cx="1315" cy="993" r="2.4" fill="#fff" stroke="#777" stroke-width="1"/></g></svg>
<div class="t" style="left:1339px;top:971px;font-size:48px;color:#fff;text-shadow:1px 1px 0.8px rgba(0,0,0,.75);will-change:transform">机器人及</div>
<div class="t" style="left:1528px;top:971px;font-size:48px;color:#fff;text-shadow:1px 1px 0.8px rgba(0,0,0,.75);will-change:transform;letter-spacing:-2.8px">PLC</div>
<div class="t" style="left:1618px;top:971px;font-size:48px;color:#fff;text-shadow:1px 1px 0.8px rgba(0,0,0,.75);will-change:transform">自动化应用</div>
<div class="a" style="left:0;top:1032px;width:1920px;height:48px;background:linear-gradient(90deg,#8597b0 0,#8799b3 62px,#a6bedc 84px,#a8bfdc 1600px,#8598b4 1665px,#8094b0 100%);border-top:1px solid #44556b"></div>
<div class="a" style="left:0;top:1033px;width:1920px;height:1px;background:rgba(255,255,255,.45)"></div>
<svg class="a" style="left:11px;top:1034px" width="44" height="44"><defs><linearGradient id="orb" x1="0" y1="0" x2="0" y2="1"><stop offset="0" stop-color="#d8e4ee"/><stop offset=".42" stop-color="#5f80a4"/><stop offset=".47" stop-color="#0a3f7a"/><stop offset=".75" stop-color="#0a5ca6"/><stop offset="1" stop-color="#10e0ff"/></linearGradient><linearGradient id="fr" x1="0" y1="0" x2="1" y2="1"><stop offset="0" stop-color="#d82010"/><stop offset="1" stop-color="#f8c020"/></linearGradient><linearGradient id="fg" x1="1" y1="0" x2="0" y2="1"><stop offset="0" stop-color="#2a9a20"/><stop offset="1" stop-color="#c8e890"/></linearGradient><linearGradient id="fb" x1="0" y1="1" x2="1" y2="0"><stop offset="0" stop-color="#0a70c0"/><stop offset="1" stop-color="#c0e4fc"/></linearGradient><linearGradient id="fy" x1="0" y1="0" x2="1" y2="1"><stop offset="0" stop-color="#fff0b0"/><stop offset="1" stop-color="#f89a10"/></linearGradient></defs><circle cx="22" cy="22" r="21.5" fill="none" stroke="rgba(255,255,255,.55)" stroke-width="1"/><circle cx="22" cy="22" r="20.5" fill="url(#orb)" stroke="#083c74" stroke-width="1.3"/><g transform="translate(23,22) scale(1.15) translate(-21.5,-22)"><path d="M11.5 10.5c3-2 6-2 9 0l-2 10c-3-2-6-2-9 0z" fill="url(#fr)"/><path d="M21.5 12.5c4 1.8 8 1.8 11.5-.5l-2 10c-3 2.5-7 2.5-11.5 .5z" fill="url(#fg)"/><path d="M9 22.5c3-2 6-2 9 0l-2.5 9.5c-3-2-6-2-9 0z" fill="url(#fb)"/><path d="M19.5 24c3.5 2 7 2 10.5 0l-2 10c-3.5 2-7 2-10.5 0z" fill="url(#fy)"/></g></svg>
<svg class="a" style="left:85px;top:1036px" width="40" height="40"><rect x="0" y="0" width="40" height="40" rx="6" fill="#f07010"/><path d="M0 31h40v3c0 3-3 6-6 6H6c-3 0-6-3-6-6z" fill="#2a2a2a"/><path d="M4 6c0-2 2-4 4-4h22c3 0 6 2 6 5v17c0 3-3 5-6 5H8c-2 0-4-2-4-4z" fill="#fff"/><rect x="11" y="8" width="16" height="15" fill="#c85a08"/><rect x="31" y="9" width="2" height="7" fill="#ddd"/><text x="20" y="38" font-size="5.5" font-family="Liberation Sans" text-anchor="middle" fill="#e06a10">OrangeApps</text></svg>
<svg class="a" style="left:155px;top:1036px" width="40" height="40"><circle cx="20" cy="20" r="19.5" fill="#ee2222"/><path d="M8 14l2 0-1 12h-2zM13 11h2.5l-1.5 17h-2.5zM18 9h2.5l-2 20h-2.5zM23 12h2.5l-1.5 17h-2.5zM28 13h2.5l-1.5 14h-2.5z" fill="#fff"/></svg>
<svg class="a" style="left:225px;top:1036px" width="40" height="40"><defs><pattern id="chk" width="2" height="2" patternUnits="userSpaceOnUse"><rect width="1" height="1" fill="#999"/><rect x="1" y="1" width="1" height="1" fill="#999"/></pattern></defs><rect x="0.5" y="0.5" width="39" height="39" rx="1.5" fill="#c8c8c8" stroke="#111"/><path d="M3 3h12L3 15zM37 3v12L25 3zM3 37V25l12 12zM37 37H25l12-12z" fill="url(#chk)" opacity=".7"/><ellipse cx="21" cy="12" rx="9.5" ry="6.5" transform="rotate(-40 21 12)" fill="#000"/><ellipse cx="10" cy="23.5" rx="5.5" ry="4" transform="rotate(-40 10 23.5)" fill="#000"/><path d="M24 18h10v3l-5 13h-3l5-12h-7z" fill="#000"/><path d="M22 16h10v3l-5 13h-3l5-12h-7z" fill="#10f0f8"/></svg>
<div class="a" style="left:282px;top:1033px;width:59px;height:46px;border:1px solid #6a7c96;border-radius:3px;background:linear-gradient(#cad9ee,#b2c6e2 50%,#a8bedc);box-shadow:inset 0 0 0 1px rgba(255,255,255,.5)"></div>
<div class="a" style="left:352px;top:1033px;width:66px;height:46px;border:1px solid #6a7c96;border-radius:3px;background:linear-gradient(#cad9ee,#b2c6e2 50%,#a8bedc);box-shadow:inset 0 0 0 1px rgba(255,255,255,.5)"></div>
<div class="a" style="left:422px;top:1033px;width:66px;height:46px;border:1px solid #6a7c96;border-radius:3px;background:linear-gradient(#cad9ee,#b2c6e2 50%,#a8bedc);box-shadow:inset 0 0 0 1px rgba(255,255,255,.5)"></div>
<div class="a" style="left:492px;top:1033px;width:66px;height:46px;border:1px solid #6a7c96;border-radius:3px;background:linear-gradient(#cad9ee,#b2c6e2 50%,#a8bedc);box-shadow:inset 0 0 0 1px rgba(255,255,255,.5)"></div>
<div class="a" style="left:343px;top:1034px;width:1px;height:45px;background:#7a8ca6"></div><div class="a" style="left:347px;top:1034px;width:1px;height:45px;background:#7a8ca6"></div>
<svg class="a" style="left:292px;top:1037px" width="40" height="40"><path d="M2 6h10l3 3h22v28H2z" fill="#e8c860" stroke="#c8a040"/><rect x="6" y="3" width="12" height="6" fill="#fff" stroke="#aaa" stroke-width=".5"/><rect x="7" y="4" width="2" height="3" fill="#2a9a40"/><rect x="14" y="6" width="14" height="5" fill="#fff" stroke="#aaa" stroke-width=".5"/><rect x="15" y="7" width="2" height="3" fill="#d82020"/><rect x="24" y="9" width="12" height="5" fill="#fff" stroke="#aaa" stroke-width=".5"/><rect x="25" y="10" width="2" height="3" fill="#2060d0"/><path d="M2 12h35v25H2z" fill="#f4dc84"/><path d="M6 26h28v11h-8v-5H14v5H6z" fill="#58b4e8" stroke="#3a90c8"/></svg>
<svg class="a" style="left:365px;top:1036px" width="40" height="40"><circle cx="20" cy="20" r="19.5" fill="#db3a2c"/><path d="M20 20L3.1 10.3A19.5 19.5 0 0 0 20 39.5z" fill="#25a244"/><path d="M20 20V39.5A19.5 19.5 0 0 0 36.9 10.3z" fill="#fcc928"/><path d="M20 20L3.1 10.3 11 24z" fill="#25a244"/><path d="M20 20H39.5L36.9 10.3z" fill="#fcc928"/><circle cx="20" cy="20" r="9" fill="#fff"/><circle cx="20" cy="20" r="7" fill="#3a7ae8"/></svg>
<svg class="a" style="left:435px;top:1036px" width="40" height="40"><defs><linearGradient id="fxbg" x1="0" y1="0" x2="1" y2="1"><stop offset="0" stop-color="#fafafa"/><stop offset="1" stop-color="#d4d4d4"/></linearGradient><linearGradient id="fxo" x1="0" y1="1" x2="1" y2="0"><stop offset="0" stop-color="#ffb020"/><stop offset=".6" stop-color="#ff6a00"/><stop offset="1" stop-color="#ffe000"/></linearGradient><linearGradient id="fxb" x1="0" y1="1" x2="1" y2="0"><stop offset="0" stop-color="#1a62b8"/><stop offset="1" stop-color="#8ccaf4"/></linearGradient></defs><rect x="2" y="2" width="36" height="36" rx="3" fill="url(#fxbg)"/><path d="M12 38C16 31 22 31 27 26 32 20 33 15 38 12V38z" fill="#c4c4c4"/><path d="M2 20C7 17 11 19 13 14 15 9 16 5 20 2h6C21 5 21 11 18 16 14 22 8 21 2 26z" fill="url(#fxb)"/><path d="M5 38C8 31 15 28 21 25 27 22 28 13 38 8v7C33 18 31 24 26 28 21 32 15 31 11 38z" fill="url(#fxo)"/><rect x="1.5" y="1.5" width="37" height="37" rx="4" fill="none" stroke="#1a5aa0" stroke-width="3"/></svg>
<svg class="a" style="left:505px;top:1036px" width="40" height="40"><path d="M3 5c0-3 2-5 5-5h24v30H3z" fill="#f4a890"/><path d="M6 10l28-3 4 25-28 4z" fill="#fdf2ec" stroke="#e8c0b0"/><path d="M8 13l24-3 3 19-24 3z" fill="#e8501c"/><rect x="12" y="16" width="7" height="2" fill="#fff" transform="rotate(-7 12 16)"/><rect x="12" y="20" width="7" height="2" fill="#fff" transform="rotate(-7 12 20)"/><rect x="12" y="24" width="7" height="2" fill="#fff" transform="rotate(-7 12 24)"/><circle cx="26" cy="20" r="5" fill="#fff"/><path d="M26 20v-5a5 5 0 0 1 5 5z" fill="#e8501c"/></svg>
<div class="t" style="left:1665px;top:1049px;font-size:12px;font-family:'Liberation Mono',monospace;color:#eef2fa">CH</div>
<svg class="a" style="left:1688px;top:1044px" width="24" height="20"><path d="M6 6c2-2 5-1 7-3" stroke="#dde4f0" fill="none"/><rect x="2" y="7" width="19" height="9" rx="1" fill="#e8ecf2" stroke="#667"/><path d="M4 10h15M4 13h15" stroke="#888" stroke-dasharray="1.5 1"/></svg>
<svg class="a" style="left:1724px;top:1050px" width="14" height="10"><path d="M1 8l6-6 6 6z" fill="#fff" stroke="#556" stroke-width=".6"/></svg>
<svg class="a" style="left:1754px;top:1049px" width="20" height="16"><rect x="1.5" y="9.5" width="3" height="4" fill="#fff" stroke="#1a2030" stroke-width="1"/><rect x="5.5" y="6.5" width="3" height="7" fill="#fff" stroke="#1a2030" stroke-width="1"/><rect x="9.5" y="3.5" width="3" height="10" fill="#fff" stroke="#1a2030" stroke-width="1"/><rect x="13.5" y="0.5" width="3" height="13" fill="#fff" stroke="#1a2030" stroke-width="1"/></svg>
<svg class="a" style="left:1782px;top:1046px" width="22" height="22"><rect x="1.5" y="3.5" width="11" height="16" rx="1.5" fill="#fff" stroke="#111" stroke-width="1.6"/><rect x="4" y="1.5" width="6" height="2.5" fill="#111"/><rect x="3.5" y="6" width="7" height="11" fill="#e8e8e8"/><path d="M14 5v4M18 5v4" stroke="#111" stroke-width="2.6"/><path d="M14 5v4M18 5v4" stroke="#fff" stroke-width="1"/><rect x="12.5" y="8.5" width="7" height="5" rx="1" fill="#fff" stroke="#111" stroke-width="1.2"/><path d="M16 13.5v7" stroke="#111" stroke-width="2.6"/><path d="M16 13.5v7" stroke="#fff" stroke-width="1"/></svg>
<div class="t" style="left:1837.5px;top:1039px;font-size:15.5px;letter-spacing:0.5px;color:#fff">18:04</div>
<div class="t" style="left:1821px;top:1060.5px;font-size:15.5px;letter-spacing:0.6px;color:#fff">2023/6/29</div>
<div class="a" style="left:1906px;top:1034px;width:14px;height:46px;border:1px solid #aab8cc;border-radius:2px;background:linear-gradient(#7a8aa0,#5a6a80 40%,#6a7a90)"></div>
</body></html>
